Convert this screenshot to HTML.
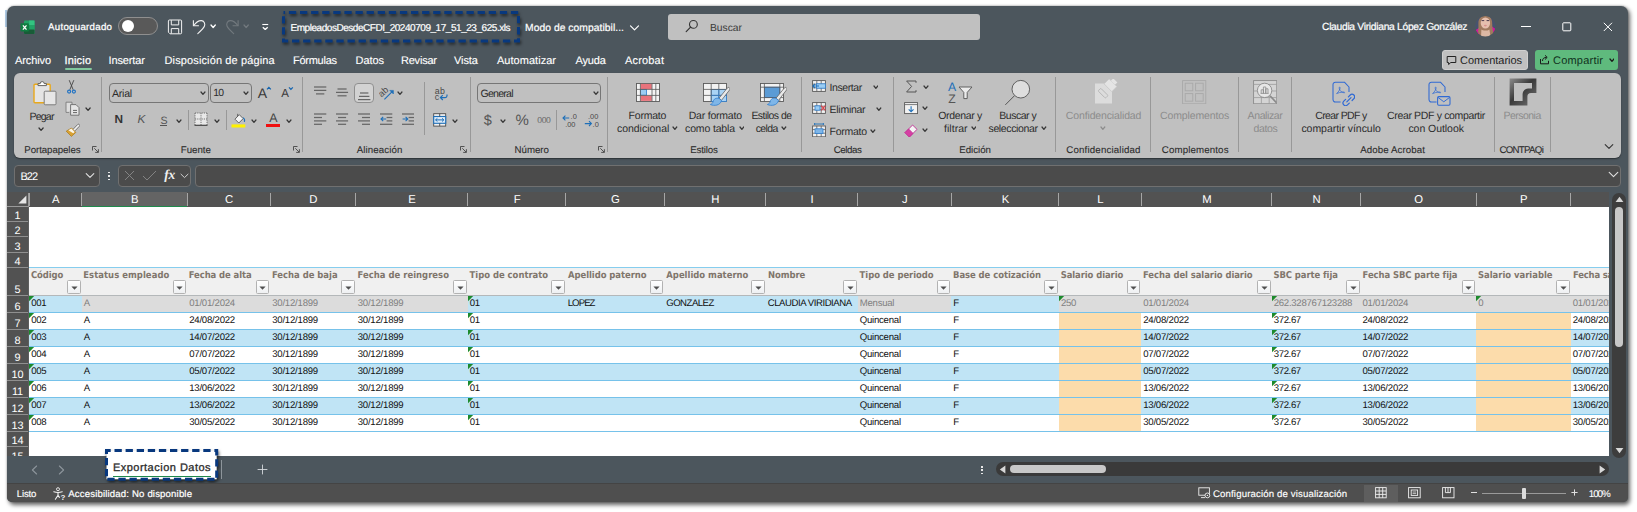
<!DOCTYPE html>
<html lang="es"><head><meta charset="utf-8"><title>EmpleadosDesdeCFDI - Excel</title>
<style>
html,body{margin:0;padding:0;background:#fff;}
body{width:1637px;height:512px;overflow:hidden;position:relative;font-family:'Liberation Sans', sans-serif;}
.a{position:absolute;display:block;}
.t{white-space:pre;text-rendering:geometricPrecision;}

</style></head><body>
<div class="a" style="left:5.4px;top:10px;width:1.6px;height:17px;background:#b4d0ea;filter:blur(0.4px);"></div>
<div class="a" style="left:7px;top:6px;width:1621px;height:496.3px;background:#4c565d;border-radius:7px 7px 5px 5px;box-shadow:2px 2.5px 4px rgba(0,0,0,.6),0 0 2px rgba(0,0,0,.35);"></div>
<svg class="a" style="left:20.4px;top:19.6px;" width="15" height="15" viewBox="0 0 15 15">
<rect x="4" y="0.5" width="10.5" height="13.5" rx="1" fill="#21a366"/>
<rect x="9.2" y="0.5" width="5.3" height="4.5" fill="#33c481"/>
<rect x="9.2" y="5" width="5.3" height="4.5" fill="#21a366"/>
<rect x="4" y="5" width="5.2" height="4.5" fill="#107c41"/>
<rect x="4" y="9.5" width="10.5" height="4.5" rx="1" fill="#185c37"/>
<rect x="0.5" y="3.2" width="8.4" height="8.4" rx="1" fill="#107c41"/>
<path d="M2.9 5.3 L6.5 9.6 M6.5 5.3 L2.9 9.6" stroke="#fff" stroke-width="1.3"/>
</svg>
<span class="a t" style="left:48.00px;top:21.00px;line-height:13px;font-size:9.7px;color:#fff;letter-spacing:0.285px;-webkit-text-stroke:0.25px #fff;">Autoguardado</span>
<div class="a" style="left:118.3px;top:17.2px;width:39.6px;height:17.8px;background:#595959;border:1px solid #8f8f8f;box-sizing:border-box;border-radius:9px;"></div>
<div class="a" style="left:121.8px;top:20.1px;width:12px;height:12px;background:#fff;border-radius:6px;"></div>
<svg class="a" style="left:167px;top:19px;" width="16" height="16" viewBox="0 0 16 16">
<path d="M1.4 2 a1 1 0 0 1 1 -1 H13.6 a1 1 0 0 1 1 1 V13.8 a1 1 0 0 1 -1 1 H3 L1.4 13.2 z" fill="none" stroke="#f2f2f2" stroke-width="1"/>
<path d="M4.3 1.2 V5.9 H11.7 V1.2" fill="none" stroke="#f2f2f2" stroke-width="1"/>
<path d="M4.3 14.6 V9.6 H11.7 V14.6" fill="none" stroke="#f2f2f2" stroke-width="1"/>
</svg>
<svg class="a" style="left:190px;top:18px;" width="18" height="18" viewBox="0 0 18 18">
<path d="M3.4 2.3 V7.8 H8.9" fill="none" stroke="#f0f0f0" stroke-width="1.1" stroke-linejoin="miter"/>
<path d="M3.7 7.5 C6 4.2 9 2.5 11.4 2.6 C14 2.8 15.4 5.6 14.5 8 C13.7 10 10.2 13.4 7.8 15.6" fill="none" stroke="#f0f0f0" stroke-width="1.1" stroke-linecap="round"/>
</svg>
<svg class="a" style="left:210.24px;top:24.15px;" width="6.32" height="4.5" viewBox="0 0 6.32 4.5"><path d="M1 1 L3.16 3.5 L5.32 1" fill="none" stroke="#fff" stroke-width="1.3" stroke-linecap="round" stroke-linejoin="round"/></svg>
<svg class="a" style="left:224px;top:18px;" width="18" height="18" viewBox="0 0 18 18">
<path d="M14.1 2.3 V7.8 H8.6" fill="none" stroke="#72797e" stroke-width="1.1" stroke-linejoin="miter"/>
<path d="M13.8 7.5 C11.5 4.2 8.5 2.5 6.1 2.6 C3.5 2.8 2.1 5.6 3 8 C3.8 10 7.3 13.4 9.7 15.6" fill="none" stroke="#72797e" stroke-width="1.1" stroke-linecap="round"/>
</svg>
<svg class="a" style="left:243.44px;top:24.15px;" width="6.32" height="4.5" viewBox="0 0 6.32 4.5"><path d="M1 1 L3.16 3.5 L5.32 1" fill="none" stroke="#72797e" stroke-width="1.2" stroke-linecap="round" stroke-linejoin="round"/></svg>
<svg class="a" style="left:261px;top:22px;" width="9" height="9" viewBox="0 0 9 9"><path d="M1.3 2.5 h5.9" stroke="#fff" stroke-width="1.1"/><path d="M1.8 5.2 L4.25 7.4 L6.7 5.2" fill="none" stroke="#fff" stroke-width="1.3" stroke-linejoin="round"/></svg>
<svg class="a" style="left:276px;top:5px;filter:drop-shadow(1.5px 2px 1.5px rgba(0,0,0,.55));overflow:visible;" width="250" height="43.5" viewBox="0 0 250 43.5"><rect x="7.5" y="7.5" width="235" height="28.5" fill="none" stroke="#08387e" stroke-width="3" stroke-dasharray="7.3 3.8" stroke-dashoffset="-5.4"/></svg>
<span class="a t" style="left:290.50px;top:22.00px;line-height:13px;font-size:10px;color:#fff;letter-spacing:-0.456px;-webkit-text-stroke:0.2px #fff;">EmpleadosDesdeCFDI_20240709_17_51_23_625.xls</span>
<span class="a t" style="left:525.00px;top:22.00px;line-height:13px;font-size:10.3px;color:#fff;letter-spacing:0.055px;-webkit-text-stroke:0.2px #fff;">Modo de compatibil...</span>
<svg class="a" style="left:629px;top:23.5px;" width="11" height="8" viewBox="0 0 11 8"><path d="M1.5 1.8 L5.5 5.8 L9.5 1.8" fill="none" stroke="#fff" stroke-width="1.2" stroke-linecap="round" stroke-linejoin="round"/></svg>
<div class="a" style="left:668px;top:13.5px;width:312px;height:26px;background:#c0c0c0;border-radius:3px;"></div>
<svg class="a" style="left:685px;top:19px;" width="14" height="14" viewBox="0 0 14 14"><circle cx="8.4" cy="5.4" r="3.9" fill="none" stroke="#333" stroke-width="1.1"/><path d="M5.6 8.2 L1.2 12.6" stroke="#333" stroke-width="1.2" stroke-linecap="round"/></svg>
<span class="a t" style="left:710.00px;top:22.00px;line-height:13px;font-size:10.3px;color:#3a3a3a;letter-spacing:-0.017px;">Buscar</span>
<span class="a t" style="left:1322.00px;top:21.00px;line-height:13px;font-size:10.3px;color:#fff;letter-spacing:-0.304px;-webkit-text-stroke:0.2px #fff;">Claudia Viridiana López González</span>
<svg class="a" style="left:1475px;top:16.3px;" width="20.6" height="20.6" viewBox="0 0 20.6 20.6">
<defs><clipPath id="av"><circle cx="10.3" cy="10.3" r="10.2"/></clipPath><filter id="avb" x="-20%" y="-20%" width="140%" height="140%"><feGaussianBlur stdDeviation="0.7"/></filter></defs>
<g clip-path="url(#av)"><g filter="url(#avb)">
<rect x="-2" y="-2" width="25" height="25" fill="#46526e"/>
<path d="M-1 15 L4 12 L8 22 H-1 z M22 14 L17 10.5 L15 22 H22 z" fill="#d3149c"/>
<path d="M3.4 7 C3.4 1.6 7 0 10.4 0 C14 0 17.4 1.8 17.2 7.4 C17.2 11 17.8 14 18.4 17 L16 21 H5.4 L3 16 C3.6 13 3.4 10 3.4 7 z" fill="#a07a5e"/>
<ellipse cx="10.4" cy="7" rx="4.7" ry="5.6" fill="#e6bfae"/>
<path d="M6.4 13.6 C8 15 12.6 15 14.4 13.4 L15.6 21 H6 z" fill="#dcb8a4"/>
<path d="M6.6 4.6 h2.6 M11.6 4.6 h2.6" stroke="#4a3a4a" stroke-width="1"/>
<ellipse cx="10.4" cy="9.6" rx="1.5" ry="0.8" fill="#d8908c"/>
</g></g></svg>
<svg class="a" style="left:1520px;top:20px;" width="12" height="12" viewBox="0 0 12 12"><path d="M1 6.5 h10" stroke="#fff" stroke-width="1"/></svg>
<svg class="a" style="left:1562.2px;top:21.5px;" width="10" height="10" viewBox="0 0 10 10"><rect x="0.8" y="0.8" width="8" height="8" rx="0.8" fill="none" stroke="#fff" stroke-width="1"/></svg>
<svg class="a" style="left:1603px;top:21.5px;" width="10" height="10" viewBox="0 0 10 10"><path d="M0.8 0.8 L9 9 M9 0.8 L0.8 9" stroke="#fff" stroke-width="1"/></svg>
<span class="a t" style="left:15.00px;top:54.00px;line-height:14px;font-size:11px;color:#fff;letter-spacing:-0.112px;-webkit-text-stroke:0.12px #fff;">Archivo</span>
<span class="a t" style="left:64.50px;top:54.00px;line-height:14px;font-size:11px;color:#fff;letter-spacing:0.165px;-webkit-text-stroke:0.25px #fff;">Inicio</span>
<span class="a t" style="left:108.50px;top:54.00px;line-height:14px;font-size:11px;color:#fff;letter-spacing:-0.117px;-webkit-text-stroke:0.12px #fff;">Insertar</span>
<span class="a t" style="left:164.50px;top:54.00px;line-height:14px;font-size:11px;color:#fff;letter-spacing:0.126px;-webkit-text-stroke:0.12px #fff;">Disposición de página</span>
<span class="a t" style="left:293.00px;top:54.00px;line-height:14px;font-size:11px;color:#fff;letter-spacing:-0.263px;-webkit-text-stroke:0.12px #fff;">Fórmulas</span>
<span class="a t" style="left:355.50px;top:54.00px;line-height:14px;font-size:11px;color:#fff;letter-spacing:-0.062px;-webkit-text-stroke:0.12px #fff;">Datos</span>
<span class="a t" style="left:401.00px;top:54.00px;line-height:14px;font-size:11px;color:#fff;letter-spacing:-0.220px;-webkit-text-stroke:0.12px #fff;">Revisar</span>
<span class="a t" style="left:454.00px;top:54.00px;line-height:14px;font-size:11px;color:#fff;letter-spacing:-0.077px;-webkit-text-stroke:0.12px #fff;">Vista</span>
<span class="a t" style="left:497.00px;top:54.00px;line-height:14px;font-size:11px;color:#fff;letter-spacing:0.028px;-webkit-text-stroke:0.12px #fff;">Automatizar</span>
<span class="a t" style="left:575.50px;top:54.00px;line-height:14px;font-size:11px;color:#fff;letter-spacing:-0.136px;-webkit-text-stroke:0.12px #fff;">Ayuda</span>
<span class="a t" style="left:625.00px;top:54.00px;line-height:14px;font-size:11px;color:#fff;letter-spacing:0.176px;-webkit-text-stroke:0.12px #fff;">Acrobat</span>
<div class="a" style="left:64.5px;top:68px;width:27px;height:1.5px;background:#80c89d;border-radius:1px;"></div>
<div class="a" style="left:1442px;top:50px;width:85.5px;height:19.5px;background:#c0c0c0;border:1px solid #d0d0d0;box-sizing:border-box;border-radius:3px;"></div>
<svg class="a" style="left:1446px;top:54.5px;" width="11" height="11" viewBox="0 0 11 11"><path d="M1.2 1.5 h8.6 v6 h-5 l-2.2 2 v-2 h-1.4 z" fill="none" stroke="#222" stroke-width="1" stroke-linejoin="round"/></svg>
<span class="a t" style="left:1460.00px;top:54.00px;line-height:14px;font-size:11px;color:#1e1e1e;letter-spacing:-0.036px;">Comentarios</span>
<div class="a" style="left:1535px;top:49.5px;width:82.5px;height:20.5px;background:#5fba7d;border-radius:3px;"></div>
<svg class="a" style="left:1538.5px;top:54px;" width="11" height="11" viewBox="0 0 11 11"><path d="M1.5 5 v4.8 h8 v-3" fill="none" stroke="#1a1a1a" stroke-width="1"/><path d="M3.5 7 C3.5 4.6 5 3.4 7.6 3.4 M6 1.3 L8.2 3.4 L6 5.5" fill="none" stroke="#1a1a1a" stroke-width="1" stroke-linejoin="round"/></svg>
<span class="a t" style="left:1553.00px;top:54.00px;line-height:14px;font-size:11px;color:#10301c;letter-spacing:0.210px;">Compartir</span>
<svg class="a" style="left:1608.52px;top:58.15px;" width="5.960000000000001" height="4.3" viewBox="0 0 5.960000000000001 4.3"><path d="M1 1 L2.9800000000000004 3.3 L4.960000000000001 1" fill="none" stroke="#1a1a1a" stroke-width="1.25" stroke-linecap="round" stroke-linejoin="round"/></svg>
<div class="a" style="left:14px;top:73px;width:1607px;height:85px;background:#c0c0c0;border-radius:6px;box-shadow:0 1px 1.5px rgba(0,0,0,.45);"></div>
<div class="a" style="left:100.9px;top:77.2px;width:1px;height:75.2px;background:#989898;"></div>
<div class="a" style="left:301.9px;top:77.2px;width:1px;height:75.2px;background:#989898;"></div>
<div class="a" style="left:469.5px;top:77.2px;width:1px;height:75.2px;background:#989898;"></div>
<div class="a" style="left:606.5px;top:77.2px;width:1px;height:75.2px;background:#989898;"></div>
<div class="a" style="left:800.5px;top:77.2px;width:1px;height:75.2px;background:#989898;"></div>
<div class="a" style="left:892.8px;top:77.2px;width:1px;height:75.2px;background:#989898;"></div>
<div class="a" style="left:1055.3px;top:77.2px;width:1px;height:75.2px;background:#989898;"></div>
<div class="a" style="left:1149.5px;top:77.2px;width:1px;height:75.2px;background:#989898;"></div>
<div class="a" style="left:1237.8px;top:77.2px;width:1px;height:75.2px;background:#989898;"></div>
<div class="a" style="left:1291.0px;top:77.2px;width:1px;height:75.2px;background:#989898;"></div>
<div class="a" style="left:1493.5px;top:77.2px;width:1px;height:75.2px;background:#989898;"></div>
<div class="a" style="left:1549.5px;top:77.2px;width:1px;height:75.2px;background:#989898;"></div>
<div class="a" style="left:188.0px;top:110.2px;width:1px;height:20.2px;background:#989898;"></div>
<div class="a" style="left:225.8px;top:110.2px;width:1px;height:20.2px;background:#989898;"></div>
<div class="a" style="left:423.6px;top:82.3px;width:1px;height:52.4px;background:#989898;"></div>
<div class="a" style="left:555.9px;top:110.2px;width:1px;height:20.2px;background:#989898;"></div>
<span class="a t" style="left:24.30px;top:144.00px;line-height:13px;font-size:9.7px;color:#2c2c2c;letter-spacing:-0.072px;-webkit-text-stroke:0.1px #2c2c2c;">Portapapeles</span>
<svg class="a" style="left:92.2px;top:145.9px;" width="7" height="7" viewBox="0 0 7 7"><path d="M0.5 4.5 V0.5 H4.5" fill="none" stroke="#444" stroke-width="0.9"/><path d="M2.3 2.3 L6.2 6.2 M6.4 3.2 V6.4 H3.2" fill="none" stroke="#444" stroke-width="0.9"/></svg>
<span class="a t" style="left:180.80px;top:144.00px;line-height:13px;font-size:9.7px;color:#2c2c2c;letter-spacing:-0.032px;-webkit-text-stroke:0.1px #2c2c2c;">Fuente</span>
<svg class="a" style="left:292.8px;top:145.9px;" width="7" height="7" viewBox="0 0 7 7"><path d="M0.5 4.5 V0.5 H4.5" fill="none" stroke="#444" stroke-width="0.9"/><path d="M2.3 2.3 L6.2 6.2 M6.4 3.2 V6.4 H3.2" fill="none" stroke="#444" stroke-width="0.9"/></svg>
<span class="a t" style="left:356.70px;top:144.00px;line-height:13px;font-size:9.7px;color:#2c2c2c;letter-spacing:0.101px;-webkit-text-stroke:0.1px #2c2c2c;">Alineación</span>
<svg class="a" style="left:459.9px;top:145.9px;" width="7" height="7" viewBox="0 0 7 7"><path d="M0.5 4.5 V0.5 H4.5" fill="none" stroke="#444" stroke-width="0.9"/><path d="M2.3 2.3 L6.2 6.2 M6.4 3.2 V6.4 H3.2" fill="none" stroke="#444" stroke-width="0.9"/></svg>
<span class="a t" style="left:514.60px;top:144.00px;line-height:13px;font-size:9.7px;color:#2c2c2c;letter-spacing:-0.031px;-webkit-text-stroke:0.1px #2c2c2c;">Número</span>
<svg class="a" style="left:597.7px;top:145.9px;" width="7" height="7" viewBox="0 0 7 7"><path d="M0.5 4.5 V0.5 H4.5" fill="none" stroke="#444" stroke-width="0.9"/><path d="M2.3 2.3 L6.2 6.2 M6.4 3.2 V6.4 H3.2" fill="none" stroke="#444" stroke-width="0.9"/></svg>
<span class="a t" style="left:690.30px;top:144.00px;line-height:13px;font-size:9.7px;color:#2c2c2c;letter-spacing:-0.174px;-webkit-text-stroke:0.1px #2c2c2c;">Estilos</span>
<span class="a t" style="left:833.80px;top:144.00px;line-height:13px;font-size:9.7px;color:#2c2c2c;letter-spacing:-0.431px;-webkit-text-stroke:0.1px #2c2c2c;">Celdas</span>
<span class="a t" style="left:959.30px;top:144.00px;line-height:13px;font-size:9.7px;color:#2c2c2c;letter-spacing:-0.012px;-webkit-text-stroke:0.1px #2c2c2c;">Edición</span>
<span class="a t" style="left:1066.30px;top:144.00px;line-height:13px;font-size:9.7px;color:#2c2c2c;letter-spacing:0.171px;-webkit-text-stroke:0.1px #2c2c2c;">Confidencialidad</span>
<span class="a t" style="left:1161.80px;top:144.00px;line-height:13px;font-size:9.7px;color:#2c2c2c;letter-spacing:0.140px;-webkit-text-stroke:0.1px #2c2c2c;">Complementos</span>
<span class="a t" style="left:1360.30px;top:144.00px;line-height:13px;font-size:9.7px;color:#2c2c2c;letter-spacing:0.093px;-webkit-text-stroke:0.1px #2c2c2c;">Adobe Acrobat</span>
<span class="a t" style="left:1499.50px;top:144.00px;line-height:13px;font-size:9.7px;color:#2c2c2c;letter-spacing:-0.718px;-webkit-text-stroke:0.1px #2c2c2c;">CONTPAQi</span>
<svg class="a" style="left:32.6px;top:79.6px;" width="24" height="26" viewBox="0 0 24 26">
<rect x="1" y="4.2" width="16.2" height="18.6" rx="1" fill="#e4e4e4" stroke="#e8a81c" stroke-width="1.4"/>
<path d="M5 5.6 v-2 h2.2 a2 2 0 0 1 4 0 h2.2 v2 z" fill="#fff" stroke="#555" stroke-width="0.9" stroke-linejoin="round"/>
<rect x="11.2" y="11.2" width="11.8" height="13.6" rx="1" fill="#e6e6e6" stroke="#7c7c7c" stroke-width="1"/>
</svg>
<span class="a t" style="left:29.50px;top:110.00px;line-height:14px;font-size:10.6px;color:#2c2c2c;letter-spacing:-0.825px;">Pegar</span>
<svg class="a" style="left:38.43px;top:126.8px;" width="6.14" height="4.4" viewBox="0 0 6.14 4.4"><path d="M1 1 L3.07 3.4 L5.14 1" fill="none" stroke="#333" stroke-width="1.25" stroke-linecap="round" stroke-linejoin="round"/></svg>
<svg class="a" style="left:66px;top:79.5px;" width="11" height="14" viewBox="0 0 11 14">
<path d="M3.2 0.2 L7.2 9.8 M7.8 0.2 L3.8 9.8" stroke="#444" stroke-width="0.9" fill="none"/>
<circle cx="3.1" cy="11.6" r="1.5" fill="none" stroke="#2273c3" stroke-width="1.2"/>
<circle cx="7.9" cy="11.6" r="1.5" fill="none" stroke="#2273c3" stroke-width="1.2"/>
</svg>
<svg class="a" style="left:64.5px;top:100.5px;" width="15" height="15" viewBox="0 0 15 15">
<path d="M4.2 11.4 h-3.2 v-10.2 h6 v2" fill="#ddd" stroke="#7a7a7a" stroke-width="0.9"/>
<path d="M5.6 3.6 h5.4 l3 3 v7.6 h-8.4 z" fill="#e6e6e6" stroke="#6a6a6a" stroke-width="0.9" stroke-linejoin="round"/>
<path d="M8 9.4 h4 M8 11.6 h4" stroke="#555" stroke-width="0.9"/>
</svg>
<svg class="a" style="left:84.53px;top:106.5px;" width="6.14" height="4.4" viewBox="0 0 6.14 4.4"><path d="M1 1 L3.07 3.4 L5.14 1" fill="none" stroke="#333" stroke-width="1.25" stroke-linecap="round" stroke-linejoin="round"/></svg>
<svg class="a" style="left:64.5px;top:122.5px;" width="15" height="15" viewBox="0 0 15 15">
<path d="M8.2 6.2 L12.6 1.6 a1.2 1.2 0 0 1 1.7 1.7 L9.9 7.9" fill="#f2f2f2" stroke="#666" stroke-width="0.9"/>
<path d="M1.2 8.2 L6.6 5 L10.8 9.4 L6.4 13.4 z" fill="#d9a233" stroke="#a8781a" stroke-width="0.7" stroke-linejoin="round"/>
<path d="M3.4 7.2 L6.4 5.6 L9.6 9 L8.2 10.2 z" fill="#fff" opacity=".9"/>
</svg>
<div class="a" style="left:108.9px;top:83.2px;width:99.7px;height:20px;background:#c0c0c0;border:1px solid #767676;box-sizing:border-box;border-radius:4px;"></div>
<span class="a t" style="left:112.00px;top:87.00px;line-height:14px;font-size:10.6px;color:#2c2c2c;letter-spacing:-0.270px;">Arial</span>
<svg class="a" style="left:199.92px;top:91.1px;" width="5.960000000000001" height="4.4" viewBox="0 0 5.960000000000001 4.4"><path d="M1 1 L2.9800000000000004 3.4 L4.960000000000001 1" fill="none" stroke="#383838" stroke-width="1.25" stroke-linecap="round" stroke-linejoin="round"/></svg>
<div class="a" style="left:210.3px;top:83.2px;width:41.3px;height:20px;background:#c0c0c0;border:1px solid #767676;box-sizing:border-box;border-radius:4px;"></div>
<span class="a t" style="left:213.20px;top:87.00px;line-height:14px;font-size:10.4px;color:#2c2c2c;letter-spacing:-0.6px;">10</span>
<svg class="a" style="left:243.32px;top:91.1px;" width="5.960000000000001" height="4.4" viewBox="0 0 5.960000000000001 4.4"><path d="M1 1 L2.9800000000000004 3.4 L4.960000000000001 1" fill="none" stroke="#383838" stroke-width="1.25" stroke-linecap="round" stroke-linejoin="round"/></svg>
<span class="a t" style="left:257.80px;top:84.00px;line-height:18px;font-size:14px;color:#3a3a3a;">A</span>
<svg class="a" style="left:266.4px;top:86.2px;" width="6" height="5" viewBox="0 0 6 5"><path d="M1 3.4 L2.9 1.4 L4.8 3.4" fill="none" stroke="#1565b0" stroke-width="1.3"/></svg>
<span class="a t" style="left:281.30px;top:87.00px;line-height:15px;font-size:11.5px;color:#3a3a3a;">A</span>
<svg class="a" style="left:288px;top:86.2px;" width="6" height="5" viewBox="0 0 6 5"><path d="M1 1.4 L2.9 3.4 L4.8 1.4" fill="none" stroke="#1565b0" stroke-width="1.3"/></svg>
<span class="a t" style="left:114.60px;top:112.00px;line-height:15px;font-size:11.8px;color:#333;font-weight:700;">N</span>
<span class="a t" style="left:137.60px;top:112.00px;line-height:15px;font-size:11.8px;color:#555;font-style:italic;">K</span>
<span class="a t" style="left:160.50px;top:114.00px;line-height:14px;font-size:10.6px;color:#555;">S</span>
<div class="a" style="left:160.2px;top:124.7px;width:6.4px;height:1px;background:#555;"></div>
<svg class="a" style="left:176.32px;top:118.6px;" width="5.960000000000001" height="4.4" viewBox="0 0 5.960000000000001 4.4"><path d="M1 1 L2.9800000000000004 3.4 L4.960000000000001 1" fill="none" stroke="#383838" stroke-width="1.25" stroke-linecap="round" stroke-linejoin="round"/></svg>
<svg class="a" style="left:193.7px;top:112.4px;" width="14" height="14.5" viewBox="0 0 14 14.5">
<rect x="1" y="1" width="12" height="12" fill="#e8e8e8"/>
<path d="M1 1 h12 M1 1 v12 M13 1 v12 M7 1 v12 M1 7 h12" stroke="#666" stroke-width="0.9" stroke-dasharray="1.2 1" fill="none"/>
<path d="M0.5 13.3 h13" stroke="#444" stroke-width="1.2"/>
</svg>
<svg class="a" style="left:213.62px;top:118.6px;" width="5.960000000000001" height="4.4" viewBox="0 0 5.960000000000001 4.4"><path d="M1 1 L2.9800000000000004 3.4 L4.960000000000001 1" fill="none" stroke="#383838" stroke-width="1.25" stroke-linecap="round" stroke-linejoin="round"/></svg>
<svg class="a" style="left:231px;top:112.5px;" width="15" height="15" viewBox="0 0 15 15">
<path d="M4 6.2 L8.2 1.6 L12.2 5.6 L7.8 10 z" fill="#f4f4f4" stroke="#555" stroke-width="0.9" stroke-linejoin="round"/>
<path d="M6.6 3.4 L6.6 0.8" stroke="#555" stroke-width="0.8"/>
<path d="M12 4.6 c1.6 1 1.9 2.6 1.4 4.2" fill="none" stroke="#1e6fb8" stroke-width="1.1"/>
<rect x="0.5" y="11.4" width="13.8" height="3.1" fill="#fff100"/>
</svg>
<svg class="a" style="left:251.02px;top:118.6px;" width="5.960000000000001" height="4.4" viewBox="0 0 5.960000000000001 4.4"><path d="M1 1 L2.9800000000000004 3.4 L4.960000000000001 1" fill="none" stroke="#383838" stroke-width="1.25" stroke-linecap="round" stroke-linejoin="round"/></svg>
<span class="a t" style="left:269.20px;top:110.00px;line-height:16px;font-size:12.4px;color:#444;">A</span>
<div class="a" style="left:266.4px;top:123.9px;width:13.5px;height:3.1px;background:#f01010;"></div>
<svg class="a" style="left:285.82px;top:118.6px;" width="5.960000000000001" height="4.4" viewBox="0 0 5.960000000000001 4.4"><path d="M1 1 L2.9800000000000004 3.4 L4.960000000000001 1" fill="none" stroke="#383838" stroke-width="1.25" stroke-linecap="round" stroke-linejoin="round"/></svg>
<svg class="a" style="left:313.8px;top:84.6px;" width="14" height="10.9" viewBox="0 0 14 10.9"><path d="M0.00 2.00 H12.30" stroke="#666" stroke-width="1.25"/><path d="M0.00 5.40 H12.30" stroke="#666" stroke-width="1.25"/><path d="M2.00 8.90 H10.30" stroke="#666" stroke-width="1.25"/></svg>
<svg class="a" style="left:336px;top:87.2px;" width="14" height="10.8" viewBox="0 0 14 10.8"><path d="M1.50 2.00 H10.60" stroke="#666" stroke-width="1.25"/><path d="M0.00 5.40 H12.10" stroke="#666" stroke-width="1.25"/><path d="M1.50 8.80 H10.60" stroke="#666" stroke-width="1.25"/></svg>
<div class="a" style="left:354.2px;top:83.2px;width:20.1px;height:19.8px;background:#d2d2d2;border:1px solid #8f8f8f;box-sizing:border-box;border-radius:4px;"></div>
<svg class="a" style="left:358px;top:90.6px;" width="14" height="10.6" viewBox="0 0 14 10.6"><path d="M2.00 2.00 H10.40" stroke="#666" stroke-width="1.25"/><path d="M1.00 5.40 H11.40" stroke="#666" stroke-width="1.25"/><path d="M0.00 8.60 H12.40" stroke="#666" stroke-width="1.25"/></svg>
<svg class="a" style="left:378.5px;top:85.5px;" width="16" height="15" viewBox="0 0 16 15">
<text x="0.2" y="8.6" font-family="Liberation Sans, sans-serif" font-size="9.2" fill="#484848" transform="rotate(-42 5 7)">ab</text>
<path d="M5.4 13.4 L13.4 5.4" stroke="#1e6fb8" stroke-width="1.1" fill="none"/>
<path d="M10.8 4.4 H14.4 V8 z" fill="#1e6fb8" stroke="#1e6fb8" stroke-width="0.6" stroke-linejoin="round"/>
</svg>
<svg class="a" style="left:397.42px;top:91.2px;" width="5.960000000000001" height="4.4" viewBox="0 0 5.960000000000001 4.4"><path d="M1 1 L2.9800000000000004 3.4 L4.960000000000001 1" fill="none" stroke="#383838" stroke-width="1.25" stroke-linecap="round" stroke-linejoin="round"/></svg>
<svg class="a" style="left:313.8px;top:112.1px;" width="14" height="14.3" viewBox="0 0 14 14.3"><path d="M0.00 2.00 H12.30" stroke="#666" stroke-width="1.25"/><path d="M0.00 5.50 H8.00" stroke="#666" stroke-width="1.25"/><path d="M0.00 8.90 H12.30" stroke="#666" stroke-width="1.25"/><path d="M0.00 12.30 H8.00" stroke="#666" stroke-width="1.25"/></svg>
<svg class="a" style="left:336px;top:112.1px;" width="14" height="14.3" viewBox="0 0 14 14.3"><path d="M0.00 2.00 H12.10" stroke="#666" stroke-width="1.25"/><path d="M2.00 5.50 H10.10" stroke="#666" stroke-width="1.25"/><path d="M0.00 8.90 H12.10" stroke="#666" stroke-width="1.25"/><path d="M2.00 12.30 H10.10" stroke="#666" stroke-width="1.25"/></svg>
<svg class="a" style="left:358.1px;top:112.1px;" width="14" height="14.3" viewBox="0 0 14 14.3"><path d="M0.00 2.00 H12.00" stroke="#666" stroke-width="1.25"/><path d="M4.00 5.50 H12.00" stroke="#666" stroke-width="1.25"/><path d="M0.00 8.90 H12.00" stroke="#666" stroke-width="1.25"/><path d="M4.00 12.30 H12.00" stroke="#666" stroke-width="1.25"/></svg>
<svg class="a" style="left:380px;top:112.1px;" width="14" height="14.3" viewBox="0 0 14 14.3"><path d="M0.00 2.00 H12.30" stroke="#666" stroke-width="1.25"/><path d="M6.60 5.50 H12.30" stroke="#666" stroke-width="1.25"/><path d="M6.60 8.90 H12.30" stroke="#666" stroke-width="1.25"/><path d="M0.00 12.30 H12.30" stroke="#666" stroke-width="1.25"/></svg>
<svg class="a" style="left:379.5px;top:116.3px;" width="7" height="6" viewBox="0 0 7 6"><path d="M1 3 H6.2 M3.2 0.8 L1 3 L3.2 5.2" fill="none" stroke="#1e6fb8" stroke-width="1.1"/></svg>
<svg class="a" style="left:402.3px;top:112.1px;" width="14" height="14.3" viewBox="0 0 14 14.3"><path d="M0.00 2.00 H12.00" stroke="#666" stroke-width="1.25"/><path d="M6.60 5.50 H12.00" stroke="#666" stroke-width="1.25"/><path d="M6.60 8.90 H12.00" stroke="#666" stroke-width="1.25"/><path d="M0.00 12.30 H12.00" stroke="#666" stroke-width="1.25"/></svg>
<svg class="a" style="left:401.6px;top:116.3px;" width="7" height="6" viewBox="0 0 7 6"><path d="M0.6 3 H5.8 M3.6 0.8 L5.8 3 L3.6 5.2" fill="none" stroke="#1e6fb8" stroke-width="1.1"/></svg>
<svg class="a" style="left:434px;top:86.5px;" width="15" height="14" viewBox="0 0 15 14">
<text x="0.8" y="6.6" font-family="Liberation Sans, sans-serif" font-size="8.8" fill="#484848" letter-spacing="0.3">ab</text>
<text x="0.8" y="12.8" font-family="Liberation Sans, sans-serif" font-size="8.8" fill="#484848">c</text>
<path d="M13 7.4 v1.4 a1.8 1.8 0 0 1 -1.8 1.8 h-4.6 M8.8 8.2 L6.4 10.6 L8.8 13" fill="none" stroke="#1e6fb8" stroke-width="1.2"/>
</svg>
<svg class="a" style="left:432.7px;top:112.6px;" width="14" height="14" viewBox="0 0 14 14">
<rect x="0.7" y="0.7" width="12" height="12.4" fill="#f0f0f0" stroke="#4a4a4a" stroke-width="0.9"/>
<rect x="0.7" y="3.5" width="12" height="6.8" fill="#dbeaf8" stroke="#1e6fb8" stroke-width="1.1"/>
<path d="M6.7 0.7 v2.8 M6.7 10.3 v2.8" stroke="#4a4a4a" stroke-width="0.9"/>
<path d="M2.6 6.9 h8.2 M4.4 5.3 L2.6 6.9 L4.4 8.5 M9 5.3 L10.8 6.9 L9 8.5" fill="none" stroke="#1e6fb8" stroke-width="1"/>
</svg>
<svg class="a" style="left:452.42px;top:118.6px;" width="5.960000000000001" height="4.4" viewBox="0 0 5.960000000000001 4.4"><path d="M1 1 L2.9800000000000004 3.4 L4.960000000000001 1" fill="none" stroke="#383838" stroke-width="1.25" stroke-linecap="round" stroke-linejoin="round"/></svg>
<div class="a" style="left:476.9px;top:83.2px;width:123.8px;height:20px;background:#c0c0c0;border:1px solid #767676;box-sizing:border-box;border-radius:4px;"></div>
<span class="a t" style="left:480.40px;top:87.00px;line-height:14px;font-size:10.6px;color:#2c2c2c;letter-spacing:-0.747px;">General</span>
<svg class="a" style="left:592.62px;top:91.1px;" width="5.960000000000001" height="4.4" viewBox="0 0 5.960000000000001 4.4"><path d="M1 1 L2.9800000000000004 3.4 L4.960000000000001 1" fill="none" stroke="#383838" stroke-width="1.25" stroke-linecap="round" stroke-linejoin="round"/></svg>
<span class="a t" style="left:483.80px;top:112.00px;line-height:19px;font-size:14.5px;color:#555;">$</span>
<svg class="a" style="left:500.12px;top:118.6px;" width="5.960000000000001" height="4.4" viewBox="0 0 5.960000000000001 4.4"><path d="M1 1 L2.9800000000000004 3.4 L4.960000000000001 1" fill="none" stroke="#383838" stroke-width="1.25" stroke-linecap="round" stroke-linejoin="round"/></svg>
<span class="a t" style="left:515.60px;top:111.00px;line-height:20px;font-size:15px;color:#555;">%</span>
<span class="a t" style="left:537.30px;top:115.00px;line-height:11px;font-size:8.6px;color:#666;letter-spacing:-0.367px;">000</span>
<svg class="a" style="left:561.7px;top:112.8px;" width="15" height="15" viewBox="0 0 15 15">
<path d="M1 5 H7.2 M3.4 2.6 L1 5 L3.4 7.4" fill="none" stroke="#1e6fb8" stroke-width="1.1"/>
<text x="8.6" y="6.4" font-family="Liberation Sans, sans-serif" font-size="7.4" fill="#4a4a4a">.0</text>
<text x="3.2" y="13.6" font-family="Liberation Sans, sans-serif" font-size="7.4" fill="#4a4a4a">.00</text>
</svg>
<svg class="a" style="left:583.5px;top:112.8px;" width="15" height="15" viewBox="0 0 15 15">
<text x="4" y="6.4" font-family="Liberation Sans, sans-serif" font-size="7.4" fill="#4a4a4a">.00</text>
<path d="M0.8 10.6 H7.4 M5 8.2 L7.4 10.6 L5 13" fill="none" stroke="#1e6fb8" stroke-width="1.1"/>
<text x="8.6" y="13.6" font-family="Liberation Sans, sans-serif" font-size="7.4" fill="#4a4a4a">.0</text>
</svg>
<svg class="a" style="left:636px;top:83px;" width="24" height="19" viewBox="0 0 24 19">
<rect x="0.5" y="0.5" width="23" height="18" fill="#f4f4f4" stroke="#5a5a5a" stroke-width="0.9"/>
<rect x="4.6" y="0.9" width="11.2" height="5.3" fill="#e8737c"/>
<rect x="4.6" y="6.6" width="6" height="5.6" fill="#9bcdf3" stroke="#2f7fd0" stroke-width="0.8"/>
<rect x="4.6" y="12.6" width="11.2" height="5.3" fill="#e8737c"/>
<path d="M4.4 0.5 v18 M16 0.5 v18 M19.8 0.5 v18 M0.5 6.4 h23 M0.5 12.4 h23" stroke="#5a5a5a" stroke-width="0.8" fill="none"/>
</svg>
<span class="a t" style="left:628.60px;top:109.00px;line-height:14px;font-size:10.5px;color:#2c2c2c;letter-spacing:-0.214px;">Formato</span>
<span class="a t" style="left:616.90px;top:122.00px;line-height:14px;font-size:10.5px;color:#2c2c2c;letter-spacing:-0.012px;">condicional</span>
<svg class="a" style="left:672.01px;top:126.3px;" width="5.78" height="4.4" viewBox="0 0 5.78 4.4"><path d="M1 1 L2.89 3.4 L4.78 1" fill="none" stroke="#383838" stroke-width="1.25" stroke-linecap="round" stroke-linejoin="round"/></svg>
<svg class="a" style="left:703px;top:83px;" width="27" height="23.5" viewBox="0 0 27 23.5">
<rect x="0.5" y="0.5" width="23" height="18" fill="#f2f2f2" stroke="#5a5a5a" stroke-width="0.9"/>
<rect x="8.2" y="6.4" width="15.2" height="12" fill="#a9d3f5" stroke="#2f7fd0" stroke-width="0.8"/>
<path d="M8.2 0.5 v18 M15.8 0.5 v18 M0.5 6.4 h23 M0.5 12.4 h23" stroke="#5a5a5a" stroke-width="0.8" fill="none"/>
<path d="M15.8 6.4 v12 M8.2 12.4 h15.2" stroke="#2f7fd0" stroke-width="0.8"/>
<path d="M16 15.2 L24.4 4.9 a1.5 1.5 0 0 1 2.3 1.9 L18.5 17.3 z" fill="#e9e9e9" stroke="#666" stroke-width="0.8" stroke-linejoin="round"/>
<path d="M16.1 15.4 C13 14.4 10.6 16.2 10.2 18.4 C10 19.8 9 20.9 7.4 21.5 C11 23.2 17.5 22.6 18.5 17.4 z" fill="#7fb6e8" stroke="#2f7fd0" stroke-width="0.8" stroke-linejoin="round"/></svg>
<span class="a t" style="left:688.70px;top:109.00px;line-height:14px;font-size:10.5px;color:#2c2c2c;letter-spacing:-0.213px;">Dar formato</span>
<span class="a t" style="left:685.10px;top:122.00px;line-height:14px;font-size:10.5px;color:#2c2c2c;letter-spacing:-0.157px;">como tabla</span>
<svg class="a" style="left:738.51px;top:126.3px;" width="5.78" height="4.4" viewBox="0 0 5.78 4.4"><path d="M1 1 L2.89 3.4 L4.78 1" fill="none" stroke="#383838" stroke-width="1.25" stroke-linecap="round" stroke-linejoin="round"/></svg>
<svg class="a" style="left:760px;top:83px;" width="27" height="23.5" viewBox="0 0 27 23.5">
<rect x="0.5" y="0.5" width="23" height="18" fill="#f2f2f2" stroke="#5a5a5a" stroke-width="0.9"/>
<rect x="4.4" y="4.2" width="15.4" height="10.4" fill="#5b9bd5" stroke="#2f6fb8" stroke-width="0.8"/>
<path d="M4.4 0.5 v18 M19.8 0.5 v18 M0.5 4.2 h23 M0.5 14.6 h23" stroke="#5a5a5a" stroke-width="0.8" fill="none"/>
<path d="M16 15.2 L24.4 4.9 a1.5 1.5 0 0 1 2.3 1.9 L18.5 17.3 z" fill="#e9e9e9" stroke="#666" stroke-width="0.8" stroke-linejoin="round"/>
<path d="M16.1 15.4 C13 14.4 10.6 16.2 10.2 18.4 C10 19.8 9 20.9 7.4 21.5 C11 23.2 17.5 22.6 18.5 17.4 z" fill="#7fb6e8" stroke="#2f7fd0" stroke-width="0.8" stroke-linejoin="round"/></svg>
<span class="a t" style="left:751.40px;top:109.00px;line-height:14px;font-size:10.5px;color:#2c2c2c;letter-spacing:-0.535px;">Estilos de</span>
<span class="a t" style="left:755.70px;top:122.00px;line-height:14px;font-size:10.5px;color:#2c2c2c;letter-spacing:-0.612px;">celda</span>
<svg class="a" style="left:781.31px;top:126.3px;" width="5.78" height="4.4" viewBox="0 0 5.78 4.4"><path d="M1 1 L2.89 3.4 L4.78 1" fill="none" stroke="#383838" stroke-width="1.25" stroke-linecap="round" stroke-linejoin="round"/></svg>
<svg class="a" style="left:812px;top:80.2px;" width="14" height="12" viewBox="0 0 14 12"><rect x="0.6" y="0.6" width="12.8" height="10.8" fill="#f2f2f2" stroke="#5a5a5a" stroke-width="0.9"/>
<path d="M0.6 4.2 h12.8 M0.6 7.8 h12.8 M4.8 0.6 v10.8 M9.2 0.6 v10.8" stroke="#5a5a5a" stroke-width="0.8" fill="none"/><rect x="4.4" y="3.8" width="9" height="4.4" fill="#9bcdf3" stroke="#2f7fd0" stroke-width="0.8"/>
<path d="M1 6 H7 M3 3.8 L0.8 6 L3 8.2" fill="none" stroke="#1e6fb8" stroke-width="1.1"/></svg>
<span class="a t" style="left:829.60px;top:81.00px;line-height:14px;font-size:10.5px;color:#2c2c2c;letter-spacing:-0.433px;">Insertar</span>
<svg class="a" style="left:872.51px;top:84.65px;" width="5.78" height="4.3" viewBox="0 0 5.78 4.3"><path d="M1 1 L2.89 3.3 L4.78 1" fill="none" stroke="#383838" stroke-width="1.25" stroke-linecap="round" stroke-linejoin="round"/></svg>
<svg class="a" style="left:812px;top:102.2px;" width="14" height="12" viewBox="0 0 14 12"><rect x="0.6" y="0.6" width="12.8" height="10.8" fill="#f2f2f2" stroke="#5a5a5a" stroke-width="0.9"/>
<path d="M0.6 4.2 h12.8 M0.6 7.8 h12.8 M4.8 0.6 v10.8 M9.2 0.6 v10.8" stroke="#5a5a5a" stroke-width="0.8" fill="none"/><rect x="3" y="3.8" width="5" height="4.4" fill="#9bcdf3" stroke="#2f7fd0" stroke-width="0.8"/>
<path d="M9.2 3.6 L13.4 8.4 M13.4 3.6 L9.2 8.4" stroke="#e0404a" stroke-width="1.1"/></svg>
<span class="a t" style="left:829.60px;top:103.00px;line-height:14px;font-size:10.5px;color:#2c2c2c;letter-spacing:-0.280px;">Eliminar</span>
<svg class="a" style="left:875.91px;top:106.65px;" width="5.78" height="4.3" viewBox="0 0 5.78 4.3"><path d="M1 1 L2.89 3.3 L4.78 1" fill="none" stroke="#383838" stroke-width="1.25" stroke-linecap="round" stroke-linejoin="round"/></svg>
<svg class="a" style="left:812px;top:123.4px;" width="14" height="14" viewBox="0 0 14 14"><path d="M2.6 1 H11.4 M2.6 0 v2 M11.4 0 v2" stroke="#1e6fb8" stroke-width="0.9"/>
<g transform="translate(0,2.4)"><rect x="0.6" y="0.6" width="12.8" height="10.8" fill="#f2f2f2" stroke="#5a5a5a" stroke-width="0.9"/>
<path d="M0.6 4.2 h12.8 M0.6 7.8 h12.8 M4.8 0.6 v10.8 M9.2 0.6 v10.8" stroke="#5a5a5a" stroke-width="0.8" fill="none"/><rect x="3" y="3.4" width="8" height="4.6" fill="#7fb6e8" stroke="#2f7fd0" stroke-width="0.8"/></g></svg>
<span class="a t" style="left:829.60px;top:125.00px;line-height:14px;font-size:10.5px;color:#2c2c2c;letter-spacing:-0.280px;">Formato</span>
<svg class="a" style="left:870.11px;top:128.65px;" width="5.78" height="4.3" viewBox="0 0 5.78 4.3"><path d="M1 1 L2.89 3.3 L4.78 1" fill="none" stroke="#383838" stroke-width="1.25" stroke-linecap="round" stroke-linejoin="round"/></svg>
<svg class="a" style="left:904.5px;top:80px;" width="13" height="13" viewBox="0 0 13 13"><path d="M11 2.8 V1 H1.6 L6.6 6.4 L1.6 12 H11 V10.2" fill="none" stroke="#555" stroke-width="1" stroke-linejoin="miter"/></svg>
<svg class="a" style="left:923.32px;top:84.6px;" width="5.960000000000001" height="4.4" viewBox="0 0 5.960000000000001 4.4"><path d="M1 1 L2.9800000000000004 3.4 L4.960000000000001 1" fill="none" stroke="#383838" stroke-width="1.25" stroke-linecap="round" stroke-linejoin="round"/></svg>
<svg class="a" style="left:903.8px;top:102.2px;" width="14.4" height="12.4" viewBox="0 0 14.4 12.4"><rect x="0.6" y="0.6" width="13" height="11" fill="#f2f2f2" stroke="#5a5a5a" stroke-width="0.9"/>
<path d="M0.6 2.6 h13" stroke="#5a5a5a" stroke-width="0.8"/>
<path d="M7.1 4.2 V9.8 M4.7 7.4 L7.1 9.8 L9.5 7.4" fill="none" stroke="#1e6fb8" stroke-width="1.1"/></svg>
<svg class="a" style="left:921.82px;top:106.4px;" width="5.960000000000001" height="4.4" viewBox="0 0 5.960000000000001 4.4"><path d="M1 1 L2.9800000000000004 3.4 L4.960000000000001 1" fill="none" stroke="#383838" stroke-width="1.25" stroke-linecap="round" stroke-linejoin="round"/></svg>
<svg class="a" style="left:904px;top:123.5px;" width="14" height="14" viewBox="0 0 14 14"><path d="M1 8.6 L8.6 1 L13 5.4 L5.4 13 z" fill="#f4f4f4" stroke="#c02f93" stroke-width="0.9" stroke-linejoin="round"/>
<path d="M1 8.6 L4.6 5 L9 9.4 L5.4 13 z" fill="#d63fa3" stroke="#c02f93" stroke-width="0.9" stroke-linejoin="round"/></svg>
<svg class="a" style="left:921.82px;top:128.4px;" width="5.960000000000001" height="4.4" viewBox="0 0 5.960000000000001 4.4"><path d="M1 1 L2.9800000000000004 3.4 L4.960000000000001 1" fill="none" stroke="#383838" stroke-width="1.25" stroke-linecap="round" stroke-linejoin="round"/></svg>
<span class="a t" style="left:948.00px;top:79.00px;line-height:16px;font-size:12.2px;color:#1e6fb8;">A</span>
<span class="a t" style="left:948.30px;top:91.00px;line-height:16px;font-size:12.2px;color:#555;">Z</span>
<svg class="a" style="left:957.6px;top:86px;" width="15" height="14.5" viewBox="0 0 15 14.5"><path d="M1 1 H14 L9.2 6.4 V12.6 L5.8 12.6 V6.4 z" fill="#ececec" stroke="#555" stroke-width="0.9" stroke-linejoin="round"/></svg>
<span class="a t" style="left:938.30px;top:109.00px;line-height:14px;font-size:10.5px;color:#2c2c2c;letter-spacing:-0.348px;">Ordenar y</span>
<span class="a t" style="left:944.00px;top:122.00px;line-height:14px;font-size:10.5px;color:#2c2c2c;letter-spacing:0.039px;">filtrar</span>
<svg class="a" style="left:970.61px;top:126.3px;" width="5.78" height="4.4" viewBox="0 0 5.78 4.4"><path d="M1 1 L2.89 3.4 L4.78 1" fill="none" stroke="#383838" stroke-width="1.25" stroke-linecap="round" stroke-linejoin="round"/></svg>
<svg class="a" style="left:1004px;top:79px;" width="27" height="27" viewBox="0 0 27 27"><path d="M10.6 16.6 L1.6 25.6" stroke="#555" stroke-width="1" stroke-linecap="round"/><circle cx="16.8" cy="10.2" r="8.8" fill="#dedede" stroke="#555" stroke-width="0.9"/></svg>
<span class="a t" style="left:999.30px;top:109.00px;line-height:14px;font-size:10.5px;color:#2c2c2c;letter-spacing:-0.480px;">Buscar y</span>
<span class="a t" style="left:988.50px;top:122.00px;line-height:14px;font-size:10.5px;color:#2c2c2c;letter-spacing:-0.365px;">seleccionar</span>
<svg class="a" style="left:1040.91px;top:126.3px;" width="5.78" height="4.4" viewBox="0 0 5.78 4.4"><path d="M1 1 L2.89 3.4 L4.78 1" fill="none" stroke="#383838" stroke-width="1.25" stroke-linecap="round" stroke-linejoin="round"/></svg>
<svg class="a" style="left:1093.8px;top:78.8px;" width="24" height="26" viewBox="0 0 24 26">
<path d="M1 4.6 H11 L18 11.6 V24.6 H1 z" fill="#dcdcdc"/>
<g transform="rotate(45 16 6)"><rect x="11" y="2.2" width="11" height="7.2" fill="#e4e4e4" stroke="#c0c0c0" stroke-width="0.6"/><rect x="13.6" y="-1" width="5.8" height="3.4" fill="#e4e4e4"/></g>
<g transform="rotate(45 9 14)"><rect x="4" y="12.2" width="10.4" height="3.8" rx="1" fill="none" stroke="#b4b4b4" stroke-width="0.9"/></g>
</svg>
<span class="a t" style="left:1065.80px;top:109.00px;line-height:14px;font-size:10.5px;color:#8c8c8c;letter-spacing:-0.135px;">Confidencialidad</span>
<svg class="a" style="left:1100.31px;top:125.65px;" width="5.78" height="4.3" viewBox="0 0 5.78 4.3"><path d="M1 1 L2.89 3.3 L4.78 1" fill="none" stroke="#8c8c8c" stroke-width="1.25" stroke-linecap="round" stroke-linejoin="round"/></svg>
<svg class="a" style="left:1182.4px;top:80px;" width="24.4" height="24.4" viewBox="0 0 24.4 24.4">
<rect x="0.6" y="0.6" width="23.2" height="23.2" fill="none" stroke="#a8a8a8" stroke-width="0.9"/>
<rect x="3.2" y="3.2" width="7.6" height="7.6" fill="none" stroke="#a8a8a8" stroke-width="0.9"/>
<rect x="13.6" y="3.2" width="7.6" height="7.6" fill="none" stroke="#a8a8a8" stroke-width="0.9"/>
<rect x="3.2" y="13.6" width="7.6" height="7.6" fill="none" stroke="#a8a8a8" stroke-width="0.9"/>
<rect x="13.6" y="13.6" width="7.6" height="7.6" fill="none" stroke="#a8a8a8" stroke-width="0.9"/>
</svg>
<span class="a t" style="left:1160.00px;top:109.00px;line-height:14px;font-size:10.5px;color:#8c8c8c;letter-spacing:-0.130px;">Complementos</span>
<svg class="a" style="left:1252.8px;top:80px;" width="24.4" height="24.4" viewBox="0 0 24.4 24.4">
<rect x="0.6" y="0.6" width="23.2" height="23.2" fill="#d4d4d4" stroke="#8a8a8a" stroke-width="0.9"/>
<path d="M0.6 4.4 h23.2 M0.6 11 h23.2 M0.6 17.6 h23.2 M8.4 4.4 v19.4 M16.2 4.4 v19.4" stroke="#9a9a9a" stroke-width="0.8" fill="none"/>
<path d="M17 15.8 L23.4 22.6" stroke="#8a8a8a" stroke-width="1.6"/>
<circle cx="11.6" cy="10.4" r="7.2" fill="#e6e6e6" stroke="#8a8a8a" stroke-width="0.9"/>
<path d="M8.2 13.4 v-3.6 h2.2 v3.6 M10.4 13.4 v-6.4 h2.4 v6.4 M12.8 13.4 v-4.6 h2.2 v4.6 M7.6 13.4 h8" fill="none" stroke="#8a8a8a" stroke-width="0.8"/>
</svg>
<span class="a t" style="left:1247.60px;top:109.00px;line-height:14px;font-size:10.5px;color:#8c8c8c;letter-spacing:-0.394px;">Analizar</span>
<span class="a t" style="left:1253.60px;top:122.00px;line-height:14px;font-size:10.5px;color:#8c8c8c;letter-spacing:-0.397px;">datos</span>
<svg class="a" style="left:1332.4px;top:81px;" width="23" height="25" viewBox="0 0 23 25"><path d="M17 11 V6 L12.4 1.2 H3.4 a2.4 2.4 0 0 0 -2.4 2.4 V18.6 a2.4 2.4 0 0 0 2.4 2.4 H8.6" fill="none" stroke="#2f69d4" stroke-width="1.05" stroke-linejoin="round"/>
<path d="M4.6 12.6 C7 10.6 8.4 7.6 8 6.4 C7.6 5.4 6.8 6.4 7.4 8 C8.2 10.2 10.2 11.8 12.4 11.8 C13.2 11.6 12.4 10.8 10.6 11 C8.6 11.2 6.4 11.8 4.6 12.6 z" fill="none" stroke="#2f69d4" stroke-width="0.75"/>
<g fill="none" stroke="#2f69d4" stroke-width="1.2" stroke-linecap="round"><path d="M13.6 18.4 l-1.8 1.8 a2.6 2.6 0 0 0 3.7 3.7 l1.8 -1.8"/><path d="M16.4 15.8 l1.8 -1.8 a2.6 2.6 0 0 1 3.7 3.7 l-1.8 1.8"/><path d="M14.8 20.8 l4.2 -4.2"/></g></svg>
<span class="a t" style="left:1315.30px;top:109.00px;line-height:14px;font-size:10.5px;color:#2c2c2c;letter-spacing:-0.634px;">Crear PDF y</span>
<span class="a t" style="left:1301.40px;top:122.00px;line-height:14px;font-size:10.5px;color:#2c2c2c;letter-spacing:-0.034px;">compartir vínculo</span>
<svg class="a" style="left:1427.8px;top:81px;" width="23" height="25" viewBox="0 0 23 25"><path d="M17 11 V6 L12.4 1.2 H3.4 a2.4 2.4 0 0 0 -2.4 2.4 V18.6 a2.4 2.4 0 0 0 2.4 2.4 H8.6" fill="none" stroke="#2f69d4" stroke-width="1.05" stroke-linejoin="round"/>
<path d="M4.6 12.6 C7 10.6 8.4 7.6 8 6.4 C7.6 5.4 6.8 6.4 7.4 8 C8.2 10.2 10.2 11.8 12.4 11.8 C13.2 11.6 12.4 10.8 10.6 11 C8.6 11.2 6.4 11.8 4.6 12.6 z" fill="none" stroke="#2f69d4" stroke-width="0.75"/>
<rect x="9.6" y="15.6" width="12.4" height="8.6" rx="1.2" fill="#c0c0c0" stroke="#2f69d4" stroke-width="1.05"/>
<path d="M10 16.4 L15.8 20.8 L21.6 16.4" fill="none" stroke="#2f69d4" stroke-width="0.95"/></svg>
<span class="a t" style="left:1387.00px;top:109.00px;line-height:14px;font-size:10.5px;color:#2c2c2c;letter-spacing:-0.342px;">Crear PDF y compartir</span>
<span class="a t" style="left:1408.40px;top:122.00px;line-height:14px;font-size:10.5px;color:#2c2c2c;letter-spacing:-0.050px;">con Outlook</span>
<svg class="a" style="left:1508.8px;top:78px;" width="28" height="28" viewBox="0 0 28 28">
<defs><linearGradient id="pg" x1="0" y1="0" x2="1" y2="1"><stop offset="0" stop-color="#8c8c8c"/><stop offset="0.45" stop-color="#3a3a3a"/><stop offset="1" stop-color="#747474"/></linearGradient></defs>
<path d="M0.6 0.6 H27.4 V15 H22 a3.6 3.6 0 0 0 -3.6 3.6 V27.4 H0.6 z" fill="url(#pg)"/>
<path d="M5 5 H23 V10.6 H19 a5.4 5.4 0 0 0 -5.4 5.4 V23 H5 z" fill="#c0c0c0"/>
</svg>
<span class="a t" style="left:1503.50px;top:109.00px;line-height:14px;font-size:10.5px;color:#8c8c8c;letter-spacing:-0.528px;">Personia</span>
<svg class="a" style="left:1604px;top:142.5px;" width="10" height="7" viewBox="0 0 10 7"><path d="M1.2 1.6 L5 5.4 L8.8 1.6" fill="none" stroke="#333" stroke-width="1.1" stroke-linecap="round" stroke-linejoin="round"/></svg>
<div class="a" style="left:14px;top:164.5px;width:86.4px;height:22px;background:#4b4b4b;border:1px solid #707070;box-sizing:border-box;border-radius:4px;"></div>
<span class="a t" style="left:20.50px;top:170.00px;line-height:14px;font-size:11px;color:#fff;letter-spacing:-1.033px;">B22</span>
<svg class="a" style="left:84.5px;top:172.3px;" width="10" height="7" viewBox="0 0 10 7"><path d="M1.2 1.6 L5 5.4 L8.8 1.6" fill="none" stroke="#e0e0e0" stroke-width="1.1" stroke-linecap="round" stroke-linejoin="round"/></svg>
<div class="a" style="left:108.4px;top:171.8px;width:1.6px;height:1.6px;background:#e8e8e8;"></div>
<div class="a" style="left:108.4px;top:175.2px;width:1.6px;height:1.6px;background:#e8e8e8;"></div>
<div class="a" style="left:108.4px;top:178.6px;width:1.6px;height:1.6px;background:#e8e8e8;"></div>
<div class="a" style="left:117.6px;top:164.5px;width:73px;height:22px;background:#4b4b4b;border:1px solid #707070;box-sizing:border-box;border-radius:4px;"></div>
<svg class="a" style="left:123.5px;top:170px;" width="11" height="11" viewBox="0 0 11 11"><path d="M1 1 L10 10 M10 1 L1 10" stroke="#8a8a8a" stroke-width="0.9"/></svg>
<svg class="a" style="left:141.5px;top:170px;" width="15" height="11" viewBox="0 0 15 11"><path d="M1 6 L5 10 L14 1" fill="none" stroke="#8a8a8a" stroke-width="0.9"/></svg>
<span class="a t" style="left:164.20px;top:166.00px;line-height:18px;font-size:13.5px;color:#f0f0f0;font-family:'Liberation Serif', serif;font-weight:700;font-style:italic;letter-spacing:-0.3px;">fx</span>
<svg class="a" style="left:179.5px;top:172.5px;" width="9" height="6" viewBox="0 0 9 6"><path d="M1 1.2 L4.5 4.6 L8 1.2" fill="none" stroke="#cfcfcf" stroke-width="1" stroke-linecap="round" stroke-linejoin="round"/></svg>
<div class="a" style="left:194.6px;top:164.5px;width:1426.6px;height:22px;background:#4b4b4b;border:1px solid #707070;box-sizing:border-box;border-radius:4px;"></div>
<svg class="a" style="left:1608px;top:171px;" width="11" height="7" viewBox="0 0 11 7"><path d="M1.2 1.4 L5.5 5.6 L9.8 1.4" fill="none" stroke="#e0e0e0" stroke-width="1.1" stroke-linecap="round" stroke-linejoin="round"/></svg>
<div class="a" style="left:7px;top:192px;width:1602.4px;height:264px;background:#fff;overflow:hidden;">
<div class="a" style="left:0px;top:0px;width:1602.4px;height:15px;background:#525252;"></div>
<div class="a" style="left:74.5px;top:0px;width:105.5px;height:14px;background:#646464;"></div>
<div class="a" style="left:74.5px;top:13.8px;width:105.5px;height:1.2px;background:#1f8a4c;"></div>
<svg class="a" style="left:11px;top:3.4px;" width="9" height="9" viewBox="0 0 9 9"><path d="M8.4 0.6 V8.6 H0.4 z" fill="#e6e6e6"/></svg>
<div class="a" style="left:21.6px;top:0.8px;width:1px;height:13.2px;background:#a6a6a6;"></div>
<span class="a t" style="left:45.08px;top:1.00px;line-height:15px;font-size:11.3px;color:#fff;">A</span>
<div class="a" style="left:74.1px;top:0.8px;width:1px;height:13.2px;background:#a6a6a6;"></div>
<span class="a t" style="left:124.08px;top:1.00px;line-height:15px;font-size:11.3px;color:#fff;">B</span>
<div class="a" style="left:179.6px;top:0.8px;width:1px;height:13.2px;background:#a6a6a6;"></div>
<span class="a t" style="left:218.01px;top:1.00px;line-height:15px;font-size:11.3px;color:#fff;">C</span>
<div class="a" style="left:262.6px;top:0.8px;width:1px;height:13.2px;background:#a6a6a6;"></div>
<span class="a t" style="left:302.26px;top:1.00px;line-height:15px;font-size:11.3px;color:#fff;">D</span>
<div class="a" style="left:348.1px;top:0.8px;width:1px;height:13.2px;background:#a6a6a6;"></div>
<span class="a t" style="left:401.33px;top:1.00px;line-height:15px;font-size:11.3px;color:#fff;">E</span>
<div class="a" style="left:460.1px;top:0.8px;width:1px;height:13.2px;background:#a6a6a6;"></div>
<span class="a t" style="left:506.65px;top:1.00px;line-height:15px;font-size:11.3px;color:#fff;">F</span>
<div class="a" style="left:558.1px;top:0.8px;width:1px;height:13.2px;background:#a6a6a6;"></div>
<span class="a t" style="left:603.95px;top:1.00px;line-height:15px;font-size:11.3px;color:#fff;">G</span>
<div class="a" style="left:656.6px;top:0.8px;width:1px;height:13.2px;background:#a6a6a6;"></div>
<span class="a t" style="left:704.26px;top:1.00px;line-height:15px;font-size:11.3px;color:#fff;">H</span>
<div class="a" style="left:758.1px;top:0.8px;width:1px;height:13.2px;background:#a6a6a6;"></div>
<span class="a t" style="left:803.53px;top:1.00px;line-height:15px;font-size:11.3px;color:#fff;">I</span>
<div class="a" style="left:850.1px;top:0.8px;width:1px;height:13.2px;background:#a6a6a6;"></div>
<span class="a t" style="left:895.02px;top:1.00px;line-height:15px;font-size:11.3px;color:#fff;">J</span>
<div class="a" style="left:943.6px;top:0.8px;width:1px;height:13.2px;background:#a6a6a6;"></div>
<span class="a t" style="left:994.71px;top:1.00px;line-height:15px;font-size:11.3px;color:#fff;">K</span>
<div class="a" style="left:1051.35px;top:0.8px;width:1px;height:13.2px;background:#a6a6a6;"></div>
<span class="a t" style="left:1090.32px;top:1.00px;line-height:15px;font-size:11.3px;color:#fff;">L</span>
<div class="a" style="left:1133.6px;top:0.8px;width:1px;height:13.2px;background:#a6a6a6;"></div>
<span class="a t" style="left:1195.14px;top:1.00px;line-height:15px;font-size:11.3px;color:#fff;">M</span>
<div class="a" style="left:1264.1px;top:0.8px;width:1px;height:13.2px;background:#a6a6a6;"></div>
<span class="a t" style="left:1305.38px;top:1.00px;line-height:15px;font-size:11.3px;color:#fff;">N</span>
<div class="a" style="left:1352.85px;top:0.8px;width:1px;height:13.2px;background:#a6a6a6;"></div>
<span class="a t" style="left:1407.32px;top:1.00px;line-height:15px;font-size:11.3px;color:#fff;">O</span>
<div class="a" style="left:1468.6px;top:0.8px;width:1px;height:13.2px;background:#a6a6a6;"></div>
<span class="a t" style="left:1513.08px;top:1.00px;line-height:15px;font-size:11.3px;color:#fff;">P</span>
<div class="a" style="left:1563.1px;top:0.8px;width:1px;height:13.2px;background:#a6a6a6;"></div>
<div class="a" style="left:0px;top:15px;width:22px;height:249px;background:#525252;"></div>
<div class="a" style="left:21px;top:1px;width:1px;height:14px;background:#9a9a9a;"></div>
<div class="a" style="left:21px;top:15px;width:1px;height:249px;background:#5e5e5e;"></div>
<div class="a" style="left:0px;top:14px;width:22px;height:1px;background:#9a9a9a;"></div>
<div class="a" style="left:0px;top:29px;width:21px;height:1px;background:#8f8f8f;"></div>
<span class="a t" style="left:7.57px;top:17.00px;line-height:14px;font-size:10.9px;color:#fff;letter-spacing:-0.2px;">1</span>
<div class="a" style="left:0px;top:44px;width:21px;height:1px;background:#8f8f8f;"></div>
<span class="a t" style="left:7.57px;top:32.00px;line-height:14px;font-size:10.9px;color:#fff;letter-spacing:-0.2px;">2</span>
<div class="a" style="left:0px;top:60px;width:21px;height:1px;background:#8f8f8f;"></div>
<span class="a t" style="left:7.57px;top:48.00px;line-height:14px;font-size:10.9px;color:#fff;letter-spacing:-0.2px;">3</span>
<div class="a" style="left:0px;top:75px;width:21px;height:1px;background:#8f8f8f;"></div>
<span class="a t" style="left:7.57px;top:63.00px;line-height:14px;font-size:10.9px;color:#fff;letter-spacing:-0.2px;">4</span>
<div class="a" style="left:0px;top:103px;width:21px;height:1px;background:#8f8f8f;"></div>
<span class="a t" style="left:7.57px;top:91.00px;line-height:14px;font-size:10.9px;color:#fff;letter-spacing:-0.2px;">5</span>
<div class="a" style="left:0px;top:120px;width:21px;height:1px;background:#8f8f8f;"></div>
<span class="a t" style="left:7.57px;top:108.00px;line-height:14px;font-size:10.9px;color:#fff;letter-spacing:-0.2px;">6</span>
<div class="a" style="left:0px;top:137px;width:21px;height:1px;background:#8f8f8f;"></div>
<span class="a t" style="left:7.57px;top:125.00px;line-height:14px;font-size:10.9px;color:#fff;letter-spacing:-0.2px;">7</span>
<div class="a" style="left:0px;top:154px;width:21px;height:1px;background:#8f8f8f;"></div>
<span class="a t" style="left:7.57px;top:142.00px;line-height:14px;font-size:10.9px;color:#fff;letter-spacing:-0.2px;">8</span>
<div class="a" style="left:0px;top:171px;width:21px;height:1px;background:#8f8f8f;"></div>
<span class="a t" style="left:7.57px;top:159.00px;line-height:14px;font-size:10.9px;color:#fff;letter-spacing:-0.2px;">9</span>
<div class="a" style="left:0px;top:188px;width:21px;height:1px;background:#8f8f8f;"></div>
<span class="a t" style="left:4.54px;top:176.00px;line-height:14px;font-size:10.9px;color:#fff;letter-spacing:-0.2px;">10</span>
<div class="a" style="left:0px;top:205px;width:21px;height:1px;background:#8f8f8f;"></div>
<span class="a t" style="left:4.94px;top:193.00px;line-height:14px;font-size:10.9px;color:#fff;letter-spacing:-0.2px;">11</span>
<div class="a" style="left:0px;top:222px;width:21px;height:1px;background:#8f8f8f;"></div>
<span class="a t" style="left:4.54px;top:210.00px;line-height:14px;font-size:10.9px;color:#fff;letter-spacing:-0.2px;">12</span>
<div class="a" style="left:0px;top:239px;width:21px;height:1px;background:#8f8f8f;"></div>
<span class="a t" style="left:4.54px;top:227.00px;line-height:14px;font-size:10.9px;color:#fff;letter-spacing:-0.2px;">13</span>
<div class="a" style="left:0px;top:254px;width:21px;height:1px;background:#8f8f8f;"></div>
<span class="a t" style="left:4.54px;top:242.00px;line-height:14px;font-size:10.9px;color:#fff;letter-spacing:-0.2px;">14</span>
<div class="a" style="left:0px;top:270px;width:21px;height:1px;background:#8f8f8f;"></div>
<span class="a t" style="left:4.54px;top:258.00px;line-height:14px;font-size:10.9px;color:#fff;letter-spacing:-0.2px;">15</span>
<div class="a" style="left:22px;top:76px;width:1580.4px;height:27px;background:#f0f0f0;"></div>
<div class="a" style="left:22px;top:75px;width:1580.4px;height:1px;background:#86cdee;"></div>
<span class="a t" style="left:23.90px;top:78.00px;line-height:12px;font-size:9.4px;color:#80766c;font-family:'DejaVu Sans Condensed', 'DejaVu Sans', sans-serif;font-weight:700;letter-spacing:-0.073px;">Código</span>
<span class="a t" style="left:76.30px;top:78.00px;line-height:12px;font-size:9.4px;color:#80766c;font-family:'DejaVu Sans Condensed', 'DejaVu Sans', sans-serif;font-weight:700;letter-spacing:0.053px;">Estatus empleado</span>
<span class="a t" style="left:181.80px;top:78.00px;line-height:12px;font-size:9.4px;color:#80766c;font-family:'DejaVu Sans Condensed', 'DejaVu Sans', sans-serif;font-weight:700;letter-spacing:-0.076px;">Fecha de alta</span>
<span class="a t" style="left:265.00px;top:78.00px;line-height:12px;font-size:9.4px;color:#80766c;font-family:'DejaVu Sans Condensed', 'DejaVu Sans', sans-serif;font-weight:700;letter-spacing:-0.010px;">Fecha de baja</span>
<span class="a t" style="left:350.60px;top:78.00px;line-height:12px;font-size:9.4px;color:#80766c;font-family:'DejaVu Sans Condensed', 'DejaVu Sans', sans-serif;font-weight:700;letter-spacing:0.025px;">Fecha de reingreso</span>
<span class="a t" style="left:462.50px;top:78.00px;line-height:12px;font-size:9.4px;color:#80766c;font-family:'DejaVu Sans Condensed', 'DejaVu Sans', sans-serif;font-weight:700;">Tipo de contrato</span>
<span class="a t" style="left:561.00px;top:78.00px;line-height:12px;font-size:9.4px;color:#80766c;font-family:'DejaVu Sans Condensed', 'DejaVu Sans', sans-serif;font-weight:700;letter-spacing:-0.039px;">Apellido paterno</span>
<span class="a t" style="left:659.30px;top:78.00px;line-height:12px;font-size:9.4px;color:#80766c;font-family:'DejaVu Sans Condensed', 'DejaVu Sans', sans-serif;font-weight:700;letter-spacing:0.011px;">Apellido materno</span>
<span class="a t" style="left:761.00px;top:78.00px;line-height:12px;font-size:9.4px;color:#80766c;font-family:'DejaVu Sans Condensed', 'DejaVu Sans', sans-serif;font-weight:700;letter-spacing:-0.075px;">Nombre</span>
<span class="a t" style="left:852.60px;top:78.00px;line-height:12px;font-size:9.4px;color:#80766c;font-family:'DejaVu Sans Condensed', 'DejaVu Sans', sans-serif;font-weight:700;letter-spacing:-0.040px;">Tipo de periodo</span>
<span class="a t" style="left:946.00px;top:78.00px;line-height:12px;font-size:9.4px;color:#80766c;font-family:'DejaVu Sans Condensed', 'DejaVu Sans', sans-serif;font-weight:700;letter-spacing:-0.035px;">Base de cotización</span>
<span class="a t" style="left:1053.70px;top:78.00px;line-height:12px;font-size:9.4px;color:#80766c;font-family:'DejaVu Sans Condensed', 'DejaVu Sans', sans-serif;font-weight:700;letter-spacing:-0.078px;">Salario diario</span>
<span class="a t" style="left:1136.00px;top:78.00px;line-height:12px;font-size:9.4px;color:#80766c;font-family:'DejaVu Sans Condensed', 'DejaVu Sans', sans-serif;font-weight:700;letter-spacing:-0.055px;">Fecha del salario diario</span>
<span class="a t" style="left:1266.50px;top:78.00px;line-height:12px;font-size:9.4px;color:#80766c;font-family:'DejaVu Sans Condensed', 'DejaVu Sans', sans-serif;font-weight:700;letter-spacing:-0.071px;">SBC parte fija</span>
<span class="a t" style="left:1355.60px;top:78.00px;line-height:12px;font-size:9.4px;color:#80766c;font-family:'DejaVu Sans Condensed', 'DejaVu Sans', sans-serif;font-weight:700;letter-spacing:-0.061px;">Fecha SBC parte fija</span>
<span class="a t" style="left:1471.00px;top:78.00px;line-height:12px;font-size:9.4px;color:#80766c;font-family:'DejaVu Sans Condensed', 'DejaVu Sans', sans-serif;font-weight:700;letter-spacing:-0.013px;">Salario variable</span>
<span class="a t" style="left:1566.10px;top:78.00px;line-height:12px;font-size:9.4px;color:#80766c;font-family:'DejaVu Sans Condensed', 'DejaVu Sans', sans-serif;font-weight:700;letter-spacing:-0.193px;">Fecha salario variable</span>
<div class="a" style="left:60.1px;top:88.1px;width:13.8px;height:14.2px;background:linear-gradient(#ffffff,#eef0f2);border:1px solid #b2b2b2;box-sizing:border-box;border-radius:1.5px;"></div>
<svg class="a" style="left:63.9px;top:93.6px;" width="7" height="4.4" viewBox="0 0 7 4.4"><path d="M0.4 0.6 H6.6 L3.5 3.8 z" fill="#505050"/></svg>
<div class="a" style="left:165.6px;top:88.1px;width:13.8px;height:14.2px;background:linear-gradient(#ffffff,#eef0f2);border:1px solid #b2b2b2;box-sizing:border-box;border-radius:1.5px;"></div>
<svg class="a" style="left:169.4px;top:93.6px;" width="7" height="4.4" viewBox="0 0 7 4.4"><path d="M0.4 0.6 H6.6 L3.5 3.8 z" fill="#505050"/></svg>
<div class="a" style="left:248.6px;top:88.1px;width:13.8px;height:14.2px;background:linear-gradient(#ffffff,#eef0f2);border:1px solid #b2b2b2;box-sizing:border-box;border-radius:1.5px;"></div>
<svg class="a" style="left:252.4px;top:93.6px;" width="7" height="4.4" viewBox="0 0 7 4.4"><path d="M0.4 0.6 H6.6 L3.5 3.8 z" fill="#505050"/></svg>
<div class="a" style="left:334.1px;top:88.1px;width:13.8px;height:14.2px;background:linear-gradient(#ffffff,#eef0f2);border:1px solid #b2b2b2;box-sizing:border-box;border-radius:1.5px;"></div>
<svg class="a" style="left:337.9px;top:93.6px;" width="7" height="4.4" viewBox="0 0 7 4.4"><path d="M0.4 0.6 H6.6 L3.5 3.8 z" fill="#505050"/></svg>
<div class="a" style="left:446.1px;top:88.1px;width:13.8px;height:14.2px;background:linear-gradient(#ffffff,#eef0f2);border:1px solid #b2b2b2;box-sizing:border-box;border-radius:1.5px;"></div>
<svg class="a" style="left:449.9px;top:93.6px;" width="7" height="4.4" viewBox="0 0 7 4.4"><path d="M0.4 0.6 H6.6 L3.5 3.8 z" fill="#505050"/></svg>
<div class="a" style="left:544.1px;top:88.1px;width:13.8px;height:14.2px;background:linear-gradient(#ffffff,#eef0f2);border:1px solid #b2b2b2;box-sizing:border-box;border-radius:1.5px;"></div>
<svg class="a" style="left:547.9px;top:93.6px;" width="7" height="4.4" viewBox="0 0 7 4.4"><path d="M0.4 0.6 H6.6 L3.5 3.8 z" fill="#505050"/></svg>
<div class="a" style="left:642.6px;top:88.1px;width:13.8px;height:14.2px;background:linear-gradient(#ffffff,#eef0f2);border:1px solid #b2b2b2;box-sizing:border-box;border-radius:1.5px;"></div>
<svg class="a" style="left:646.4px;top:93.6px;" width="7" height="4.4" viewBox="0 0 7 4.4"><path d="M0.4 0.6 H6.6 L3.5 3.8 z" fill="#505050"/></svg>
<div class="a" style="left:744.1px;top:88.1px;width:13.8px;height:14.2px;background:linear-gradient(#ffffff,#eef0f2);border:1px solid #b2b2b2;box-sizing:border-box;border-radius:1.5px;"></div>
<svg class="a" style="left:747.9px;top:93.6px;" width="7" height="4.4" viewBox="0 0 7 4.4"><path d="M0.4 0.6 H6.6 L3.5 3.8 z" fill="#505050"/></svg>
<div class="a" style="left:836.1px;top:88.1px;width:13.8px;height:14.2px;background:linear-gradient(#ffffff,#eef0f2);border:1px solid #b2b2b2;box-sizing:border-box;border-radius:1.5px;"></div>
<svg class="a" style="left:839.9px;top:93.6px;" width="7" height="4.4" viewBox="0 0 7 4.4"><path d="M0.4 0.6 H6.6 L3.5 3.8 z" fill="#505050"/></svg>
<div class="a" style="left:929.6px;top:88.1px;width:13.8px;height:14.2px;background:linear-gradient(#ffffff,#eef0f2);border:1px solid #b2b2b2;box-sizing:border-box;border-radius:1.5px;"></div>
<svg class="a" style="left:933.4px;top:93.6px;" width="7" height="4.4" viewBox="0 0 7 4.4"><path d="M0.4 0.6 H6.6 L3.5 3.8 z" fill="#505050"/></svg>
<div class="a" style="left:1037.35px;top:88.1px;width:13.8px;height:14.2px;background:linear-gradient(#ffffff,#eef0f2);border:1px solid #b2b2b2;box-sizing:border-box;border-radius:1.5px;"></div>
<svg class="a" style="left:1041.15px;top:93.6px;" width="7" height="4.4" viewBox="0 0 7 4.4"><path d="M0.4 0.6 H6.6 L3.5 3.8 z" fill="#505050"/></svg>
<div class="a" style="left:1119.6px;top:88.1px;width:13.8px;height:14.2px;background:linear-gradient(#ffffff,#eef0f2);border:1px solid #b2b2b2;box-sizing:border-box;border-radius:1.5px;"></div>
<svg class="a" style="left:1123.4px;top:93.6px;" width="7" height="4.4" viewBox="0 0 7 4.4"><path d="M0.4 0.6 H6.6 L3.5 3.8 z" fill="#505050"/></svg>
<div class="a" style="left:1250.1px;top:88.1px;width:13.8px;height:14.2px;background:linear-gradient(#ffffff,#eef0f2);border:1px solid #b2b2b2;box-sizing:border-box;border-radius:1.5px;"></div>
<svg class="a" style="left:1253.9px;top:93.6px;" width="7" height="4.4" viewBox="0 0 7 4.4"><path d="M0.4 0.6 H6.6 L3.5 3.8 z" fill="#505050"/></svg>
<div class="a" style="left:1338.85px;top:88.1px;width:13.8px;height:14.2px;background:linear-gradient(#ffffff,#eef0f2);border:1px solid #b2b2b2;box-sizing:border-box;border-radius:1.5px;"></div>
<svg class="a" style="left:1342.65px;top:93.6px;" width="7" height="4.4" viewBox="0 0 7 4.4"><path d="M0.4 0.6 H6.6 L3.5 3.8 z" fill="#505050"/></svg>
<div class="a" style="left:1454.6px;top:88.1px;width:13.8px;height:14.2px;background:linear-gradient(#ffffff,#eef0f2);border:1px solid #b2b2b2;box-sizing:border-box;border-radius:1.5px;"></div>
<svg class="a" style="left:1458.4px;top:93.6px;" width="7" height="4.4" viewBox="0 0 7 4.4"><path d="M0.4 0.6 H6.6 L3.5 3.8 z" fill="#505050"/></svg>
<div class="a" style="left:1549.1px;top:88.1px;width:13.8px;height:14.2px;background:linear-gradient(#ffffff,#eef0f2);border:1px solid #b2b2b2;box-sizing:border-box;border-radius:1.5px;"></div>
<svg class="a" style="left:1552.9px;top:93.6px;" width="7" height="4.4" viewBox="0 0 7 4.4"><path d="M0.4 0.6 H6.6 L3.5 3.8 z" fill="#505050"/></svg>
<div class="a" style="left:22px;top:104px;width:52.5px;height:16px;background:#c0e4f5;"></div>
<div class="a" style="left:74.5px;top:104px;width:386.0px;height:16px;background:#dcdcdc;"></div>
<div class="a" style="left:460.5px;top:104px;width:390.0px;height:16px;background:#c0e4f5;"></div>
<div class="a" style="left:850.5px;top:104px;width:93.5px;height:16px;background:#dcdcdc;"></div>
<div class="a" style="left:944px;top:104px;width:107.75px;height:16px;background:#c0e4f5;"></div>
<div class="a" style="left:1051.75px;top:104px;width:550.75px;height:16px;background:#dcdcdc;"></div>
<div class="a" style="left:22px;top:120px;width:1580.4px;height:1px;background:#76c2ea;"></div>
<span class="a t" style="left:24.20px;top:106.00px;line-height:12px;font-size:9.6px;color:#111;letter-spacing:-0.25px;">001</span>
<svg class="a" style="left:22px;top:104px;" width="6" height="6" viewBox="0 0 6 6"><path d="M0 0 H5.2 L0 5.2 z" fill="#1d8a2c"/></svg>
<span class="a t" style="left:76.70px;top:106.00px;line-height:12px;font-size:9.6px;color:#808080;letter-spacing:-0.25px;">A</span>
<span class="a t" style="left:182.20px;top:106.00px;line-height:12px;font-size:9.6px;color:#808080;letter-spacing:-0.223px;">01/01/2024</span>
<span class="a t" style="left:265.20px;top:106.00px;line-height:12px;font-size:9.6px;color:#808080;letter-spacing:-0.223px;">30/12/1899</span>
<span class="a t" style="left:350.70px;top:106.00px;line-height:12px;font-size:9.6px;color:#808080;letter-spacing:-0.223px;">30/12/1899</span>
<span class="a t" style="left:462.70px;top:106.00px;line-height:12px;font-size:9.6px;color:#111;letter-spacing:-0.25px;">01</span>
<svg class="a" style="left:460.5px;top:104px;" width="6" height="6" viewBox="0 0 6 6"><path d="M0 0 H5.2 L0 5.2 z" fill="#1d8a2c"/></svg>
<span class="a t" style="left:560.70px;top:106.00px;line-height:12px;font-size:9.6px;color:#111;letter-spacing:-0.915px;">LOPEZ</span>
<span class="a t" style="left:659.20px;top:106.00px;line-height:12px;font-size:9.6px;color:#111;letter-spacing:-0.502px;">GONZALEZ</span>
<span class="a t" style="left:760.70px;top:106.00px;line-height:12px;font-size:9.6px;color:#111;letter-spacing:-0.452px;">CLAUDIA VIRIDIANA</span>
<span class="a t" style="left:852.70px;top:106.00px;line-height:12px;font-size:9.6px;color:#808080;letter-spacing:-0.241px;">Mensual</span>
<span class="a t" style="left:946.20px;top:106.00px;line-height:12px;font-size:9.6px;color:#111;letter-spacing:-0.25px;">F</span>
<span class="a t" style="left:1053.95px;top:106.00px;line-height:12px;font-size:9.6px;color:#808080;letter-spacing:-0.25px;">250</span>
<svg class="a" style="left:1051.75px;top:104px;" width="6" height="6" viewBox="0 0 6 6"><path d="M0 0 H5.2 L0 5.2 z" fill="#1d8a2c"/></svg>
<span class="a t" style="left:1136.20px;top:106.00px;line-height:12px;font-size:9.6px;color:#808080;letter-spacing:-0.223px;">01/01/2024</span>
<span class="a t" style="left:1266.70px;top:106.00px;line-height:12px;font-size:9.6px;color:#808080;letter-spacing:-0.266px;">262.328767123288</span>
<svg class="a" style="left:1264.5px;top:104px;" width="6" height="6" viewBox="0 0 6 6"><path d="M0 0 H5.2 L0 5.2 z" fill="#1d8a2c"/></svg>
<span class="a t" style="left:1355.45px;top:106.00px;line-height:12px;font-size:9.6px;color:#808080;letter-spacing:-0.223px;">01/01/2024</span>
<span class="a t" style="left:1471.20px;top:106.00px;line-height:12px;font-size:9.6px;color:#808080;letter-spacing:-0.25px;">0</span>
<svg class="a" style="left:1469px;top:104px;" width="6" height="6" viewBox="0 0 6 6"><path d="M0 0 H5.2 L0 5.2 z" fill="#1d8a2c"/></svg>
<span class="a t" style="left:1565.70px;top:106.00px;line-height:12px;font-size:9.6px;color:#808080;letter-spacing:-0.223px;">01/01/2024</span>
<div class="a" style="left:1051.75px;top:121px;width:82.25px;height:16px;background:#fcdcab;"></div>
<div class="a" style="left:1469px;top:121px;width:94.5px;height:16px;background:#fcdcab;"></div>
<div class="a" style="left:22px;top:137px;width:1580.4px;height:1px;background:#76c2ea;"></div>
<span class="a t" style="left:24.20px;top:123.00px;line-height:12px;font-size:9.6px;color:#111;letter-spacing:-0.25px;">002</span>
<svg class="a" style="left:22px;top:121px;" width="6" height="6" viewBox="0 0 6 6"><path d="M0 0 H5.2 L0 5.2 z" fill="#1d8a2c"/></svg>
<span class="a t" style="left:76.70px;top:123.00px;line-height:12px;font-size:9.6px;color:#111;letter-spacing:-0.25px;">A</span>
<span class="a t" style="left:182.20px;top:123.00px;line-height:12px;font-size:9.6px;color:#111;letter-spacing:-0.223px;">24/08/2022</span>
<span class="a t" style="left:265.20px;top:123.00px;line-height:12px;font-size:9.6px;color:#111;letter-spacing:-0.223px;">30/12/1899</span>
<span class="a t" style="left:350.70px;top:123.00px;line-height:12px;font-size:9.6px;color:#111;letter-spacing:-0.223px;">30/12/1899</span>
<span class="a t" style="left:462.70px;top:123.00px;line-height:12px;font-size:9.6px;color:#111;letter-spacing:-0.25px;">01</span>
<svg class="a" style="left:460.5px;top:121px;" width="6" height="6" viewBox="0 0 6 6"><path d="M0 0 H5.2 L0 5.2 z" fill="#1d8a2c"/></svg>
<span class="a t" style="left:852.70px;top:123.00px;line-height:12px;font-size:9.6px;color:#111;letter-spacing:-0.235px;">Quincenal</span>
<span class="a t" style="left:946.20px;top:123.00px;line-height:12px;font-size:9.6px;color:#111;letter-spacing:-0.25px;">F</span>
<span class="a t" style="left:1136.20px;top:123.00px;line-height:12px;font-size:9.6px;color:#111;letter-spacing:-0.223px;">24/08/2022</span>
<span class="a t" style="left:1266.70px;top:123.00px;line-height:12px;font-size:9.6px;color:#111;letter-spacing:-0.366px;">372.67</span>
<svg class="a" style="left:1264.5px;top:121px;" width="6" height="6" viewBox="0 0 6 6"><path d="M0 0 H5.2 L0 5.2 z" fill="#1d8a2c"/></svg>
<span class="a t" style="left:1355.45px;top:123.00px;line-height:12px;font-size:9.6px;color:#111;letter-spacing:-0.223px;">24/08/2022</span>
<span class="a t" style="left:1565.70px;top:123.00px;line-height:12px;font-size:9.6px;color:#111;letter-spacing:-0.223px;">24/08/2022</span>
<div class="a" style="left:22px;top:138px;width:1580.4px;height:16px;background:#c0e4f5;"></div>
<div class="a" style="left:1051.75px;top:138px;width:82.25px;height:16px;background:#fcdcab;"></div>
<div class="a" style="left:1469px;top:138px;width:94.5px;height:16px;background:#fcdcab;"></div>
<div class="a" style="left:22px;top:154px;width:1580.4px;height:1px;background:#76c2ea;"></div>
<span class="a t" style="left:24.20px;top:140.00px;line-height:12px;font-size:9.6px;color:#111;letter-spacing:-0.25px;">003</span>
<svg class="a" style="left:22px;top:138px;" width="6" height="6" viewBox="0 0 6 6"><path d="M0 0 H5.2 L0 5.2 z" fill="#1d8a2c"/></svg>
<span class="a t" style="left:76.70px;top:140.00px;line-height:12px;font-size:9.6px;color:#111;letter-spacing:-0.25px;">A</span>
<span class="a t" style="left:182.20px;top:140.00px;line-height:12px;font-size:9.6px;color:#111;letter-spacing:-0.223px;">14/07/2022</span>
<span class="a t" style="left:265.20px;top:140.00px;line-height:12px;font-size:9.6px;color:#111;letter-spacing:-0.223px;">30/12/1899</span>
<span class="a t" style="left:350.70px;top:140.00px;line-height:12px;font-size:9.6px;color:#111;letter-spacing:-0.223px;">30/12/1899</span>
<span class="a t" style="left:462.70px;top:140.00px;line-height:12px;font-size:9.6px;color:#111;letter-spacing:-0.25px;">01</span>
<svg class="a" style="left:460.5px;top:138px;" width="6" height="6" viewBox="0 0 6 6"><path d="M0 0 H5.2 L0 5.2 z" fill="#1d8a2c"/></svg>
<span class="a t" style="left:852.70px;top:140.00px;line-height:12px;font-size:9.6px;color:#111;letter-spacing:-0.235px;">Quincenal</span>
<span class="a t" style="left:946.20px;top:140.00px;line-height:12px;font-size:9.6px;color:#111;letter-spacing:-0.25px;">F</span>
<span class="a t" style="left:1136.20px;top:140.00px;line-height:12px;font-size:9.6px;color:#111;letter-spacing:-0.223px;">14/07/2022</span>
<span class="a t" style="left:1266.70px;top:140.00px;line-height:12px;font-size:9.6px;color:#111;letter-spacing:-0.366px;">372.67</span>
<svg class="a" style="left:1264.5px;top:138px;" width="6" height="6" viewBox="0 0 6 6"><path d="M0 0 H5.2 L0 5.2 z" fill="#1d8a2c"/></svg>
<span class="a t" style="left:1355.45px;top:140.00px;line-height:12px;font-size:9.6px;color:#111;letter-spacing:-0.223px;">14/07/2022</span>
<span class="a t" style="left:1565.70px;top:140.00px;line-height:12px;font-size:9.6px;color:#111;letter-spacing:-0.223px;">14/07/2022</span>
<div class="a" style="left:1051.75px;top:155px;width:82.25px;height:16px;background:#fcdcab;"></div>
<div class="a" style="left:1469px;top:155px;width:94.5px;height:16px;background:#fcdcab;"></div>
<div class="a" style="left:22px;top:171px;width:1580.4px;height:1px;background:#76c2ea;"></div>
<span class="a t" style="left:24.20px;top:157.00px;line-height:12px;font-size:9.6px;color:#111;letter-spacing:-0.25px;">004</span>
<svg class="a" style="left:22px;top:155px;" width="6" height="6" viewBox="0 0 6 6"><path d="M0 0 H5.2 L0 5.2 z" fill="#1d8a2c"/></svg>
<span class="a t" style="left:76.70px;top:157.00px;line-height:12px;font-size:9.6px;color:#111;letter-spacing:-0.25px;">A</span>
<span class="a t" style="left:182.20px;top:157.00px;line-height:12px;font-size:9.6px;color:#111;letter-spacing:-0.223px;">07/07/2022</span>
<span class="a t" style="left:265.20px;top:157.00px;line-height:12px;font-size:9.6px;color:#111;letter-spacing:-0.223px;">30/12/1899</span>
<span class="a t" style="left:350.70px;top:157.00px;line-height:12px;font-size:9.6px;color:#111;letter-spacing:-0.223px;">30/12/1899</span>
<span class="a t" style="left:462.70px;top:157.00px;line-height:12px;font-size:9.6px;color:#111;letter-spacing:-0.25px;">01</span>
<svg class="a" style="left:460.5px;top:155px;" width="6" height="6" viewBox="0 0 6 6"><path d="M0 0 H5.2 L0 5.2 z" fill="#1d8a2c"/></svg>
<span class="a t" style="left:852.70px;top:157.00px;line-height:12px;font-size:9.6px;color:#111;letter-spacing:-0.235px;">Quincenal</span>
<span class="a t" style="left:946.20px;top:157.00px;line-height:12px;font-size:9.6px;color:#111;letter-spacing:-0.25px;">F</span>
<span class="a t" style="left:1136.20px;top:157.00px;line-height:12px;font-size:9.6px;color:#111;letter-spacing:-0.223px;">07/07/2022</span>
<span class="a t" style="left:1266.70px;top:157.00px;line-height:12px;font-size:9.6px;color:#111;letter-spacing:-0.366px;">372.67</span>
<svg class="a" style="left:1264.5px;top:155px;" width="6" height="6" viewBox="0 0 6 6"><path d="M0 0 H5.2 L0 5.2 z" fill="#1d8a2c"/></svg>
<span class="a t" style="left:1355.45px;top:157.00px;line-height:12px;font-size:9.6px;color:#111;letter-spacing:-0.223px;">07/07/2022</span>
<span class="a t" style="left:1565.70px;top:157.00px;line-height:12px;font-size:9.6px;color:#111;letter-spacing:-0.223px;">07/07/2022</span>
<div class="a" style="left:22px;top:172px;width:1580.4px;height:16px;background:#c0e4f5;"></div>
<div class="a" style="left:1051.75px;top:172px;width:82.25px;height:16px;background:#fcdcab;"></div>
<div class="a" style="left:1469px;top:172px;width:94.5px;height:16px;background:#fcdcab;"></div>
<div class="a" style="left:22px;top:188px;width:1580.4px;height:1px;background:#76c2ea;"></div>
<span class="a t" style="left:24.20px;top:174.00px;line-height:12px;font-size:9.6px;color:#111;letter-spacing:-0.25px;">005</span>
<svg class="a" style="left:22px;top:172px;" width="6" height="6" viewBox="0 0 6 6"><path d="M0 0 H5.2 L0 5.2 z" fill="#1d8a2c"/></svg>
<span class="a t" style="left:76.70px;top:174.00px;line-height:12px;font-size:9.6px;color:#111;letter-spacing:-0.25px;">A</span>
<span class="a t" style="left:182.20px;top:174.00px;line-height:12px;font-size:9.6px;color:#111;letter-spacing:-0.223px;">05/07/2022</span>
<span class="a t" style="left:265.20px;top:174.00px;line-height:12px;font-size:9.6px;color:#111;letter-spacing:-0.223px;">30/12/1899</span>
<span class="a t" style="left:350.70px;top:174.00px;line-height:12px;font-size:9.6px;color:#111;letter-spacing:-0.223px;">30/12/1899</span>
<span class="a t" style="left:462.70px;top:174.00px;line-height:12px;font-size:9.6px;color:#111;letter-spacing:-0.25px;">01</span>
<svg class="a" style="left:460.5px;top:172px;" width="6" height="6" viewBox="0 0 6 6"><path d="M0 0 H5.2 L0 5.2 z" fill="#1d8a2c"/></svg>
<span class="a t" style="left:852.70px;top:174.00px;line-height:12px;font-size:9.6px;color:#111;letter-spacing:-0.235px;">Quincenal</span>
<span class="a t" style="left:946.20px;top:174.00px;line-height:12px;font-size:9.6px;color:#111;letter-spacing:-0.25px;">F</span>
<span class="a t" style="left:1136.20px;top:174.00px;line-height:12px;font-size:9.6px;color:#111;letter-spacing:-0.223px;">05/07/2022</span>
<span class="a t" style="left:1266.70px;top:174.00px;line-height:12px;font-size:9.6px;color:#111;letter-spacing:-0.366px;">372.67</span>
<svg class="a" style="left:1264.5px;top:172px;" width="6" height="6" viewBox="0 0 6 6"><path d="M0 0 H5.2 L0 5.2 z" fill="#1d8a2c"/></svg>
<span class="a t" style="left:1355.45px;top:174.00px;line-height:12px;font-size:9.6px;color:#111;letter-spacing:-0.223px;">05/07/2022</span>
<span class="a t" style="left:1565.70px;top:174.00px;line-height:12px;font-size:9.6px;color:#111;letter-spacing:-0.223px;">05/07/2022</span>
<div class="a" style="left:1051.75px;top:189px;width:82.25px;height:16px;background:#fcdcab;"></div>
<div class="a" style="left:1469px;top:189px;width:94.5px;height:16px;background:#fcdcab;"></div>
<div class="a" style="left:22px;top:205px;width:1580.4px;height:1px;background:#76c2ea;"></div>
<span class="a t" style="left:24.20px;top:191.00px;line-height:12px;font-size:9.6px;color:#111;letter-spacing:-0.25px;">006</span>
<svg class="a" style="left:22px;top:189px;" width="6" height="6" viewBox="0 0 6 6"><path d="M0 0 H5.2 L0 5.2 z" fill="#1d8a2c"/></svg>
<span class="a t" style="left:76.70px;top:191.00px;line-height:12px;font-size:9.6px;color:#111;letter-spacing:-0.25px;">A</span>
<span class="a t" style="left:182.20px;top:191.00px;line-height:12px;font-size:9.6px;color:#111;letter-spacing:-0.223px;">13/06/2022</span>
<span class="a t" style="left:265.20px;top:191.00px;line-height:12px;font-size:9.6px;color:#111;letter-spacing:-0.223px;">30/12/1899</span>
<span class="a t" style="left:350.70px;top:191.00px;line-height:12px;font-size:9.6px;color:#111;letter-spacing:-0.223px;">30/12/1899</span>
<span class="a t" style="left:462.70px;top:191.00px;line-height:12px;font-size:9.6px;color:#111;letter-spacing:-0.25px;">01</span>
<svg class="a" style="left:460.5px;top:189px;" width="6" height="6" viewBox="0 0 6 6"><path d="M0 0 H5.2 L0 5.2 z" fill="#1d8a2c"/></svg>
<span class="a t" style="left:852.70px;top:191.00px;line-height:12px;font-size:9.6px;color:#111;letter-spacing:-0.235px;">Quincenal</span>
<span class="a t" style="left:946.20px;top:191.00px;line-height:12px;font-size:9.6px;color:#111;letter-spacing:-0.25px;">F</span>
<span class="a t" style="left:1136.20px;top:191.00px;line-height:12px;font-size:9.6px;color:#111;letter-spacing:-0.223px;">13/06/2022</span>
<span class="a t" style="left:1266.70px;top:191.00px;line-height:12px;font-size:9.6px;color:#111;letter-spacing:-0.366px;">372.67</span>
<svg class="a" style="left:1264.5px;top:189px;" width="6" height="6" viewBox="0 0 6 6"><path d="M0 0 H5.2 L0 5.2 z" fill="#1d8a2c"/></svg>
<span class="a t" style="left:1355.45px;top:191.00px;line-height:12px;font-size:9.6px;color:#111;letter-spacing:-0.223px;">13/06/2022</span>
<span class="a t" style="left:1565.70px;top:191.00px;line-height:12px;font-size:9.6px;color:#111;letter-spacing:-0.223px;">13/06/2022</span>
<div class="a" style="left:22px;top:206px;width:1580.4px;height:16px;background:#c0e4f5;"></div>
<div class="a" style="left:1051.75px;top:206px;width:82.25px;height:16px;background:#fcdcab;"></div>
<div class="a" style="left:1469px;top:206px;width:94.5px;height:16px;background:#fcdcab;"></div>
<div class="a" style="left:22px;top:222px;width:1580.4px;height:1px;background:#76c2ea;"></div>
<span class="a t" style="left:24.20px;top:208.00px;line-height:12px;font-size:9.6px;color:#111;letter-spacing:-0.25px;">007</span>
<svg class="a" style="left:22px;top:206px;" width="6" height="6" viewBox="0 0 6 6"><path d="M0 0 H5.2 L0 5.2 z" fill="#1d8a2c"/></svg>
<span class="a t" style="left:76.70px;top:208.00px;line-height:12px;font-size:9.6px;color:#111;letter-spacing:-0.25px;">A</span>
<span class="a t" style="left:182.20px;top:208.00px;line-height:12px;font-size:9.6px;color:#111;letter-spacing:-0.223px;">13/06/2022</span>
<span class="a t" style="left:265.20px;top:208.00px;line-height:12px;font-size:9.6px;color:#111;letter-spacing:-0.223px;">30/12/1899</span>
<span class="a t" style="left:350.70px;top:208.00px;line-height:12px;font-size:9.6px;color:#111;letter-spacing:-0.223px;">30/12/1899</span>
<span class="a t" style="left:462.70px;top:208.00px;line-height:12px;font-size:9.6px;color:#111;letter-spacing:-0.25px;">01</span>
<svg class="a" style="left:460.5px;top:206px;" width="6" height="6" viewBox="0 0 6 6"><path d="M0 0 H5.2 L0 5.2 z" fill="#1d8a2c"/></svg>
<span class="a t" style="left:852.70px;top:208.00px;line-height:12px;font-size:9.6px;color:#111;letter-spacing:-0.235px;">Quincenal</span>
<span class="a t" style="left:946.20px;top:208.00px;line-height:12px;font-size:9.6px;color:#111;letter-spacing:-0.25px;">F</span>
<span class="a t" style="left:1136.20px;top:208.00px;line-height:12px;font-size:9.6px;color:#111;letter-spacing:-0.223px;">13/06/2022</span>
<span class="a t" style="left:1266.70px;top:208.00px;line-height:12px;font-size:9.6px;color:#111;letter-spacing:-0.366px;">372.67</span>
<svg class="a" style="left:1264.5px;top:206px;" width="6" height="6" viewBox="0 0 6 6"><path d="M0 0 H5.2 L0 5.2 z" fill="#1d8a2c"/></svg>
<span class="a t" style="left:1355.45px;top:208.00px;line-height:12px;font-size:9.6px;color:#111;letter-spacing:-0.223px;">13/06/2022</span>
<span class="a t" style="left:1565.70px;top:208.00px;line-height:12px;font-size:9.6px;color:#111;letter-spacing:-0.223px;">13/06/2022</span>
<div class="a" style="left:1051.75px;top:223px;width:82.25px;height:16px;background:#fcdcab;"></div>
<div class="a" style="left:1469px;top:223px;width:94.5px;height:16px;background:#fcdcab;"></div>
<div class="a" style="left:22px;top:239px;width:1580.4px;height:1px;background:#76c2ea;"></div>
<span class="a t" style="left:24.20px;top:225.00px;line-height:12px;font-size:9.6px;color:#111;letter-spacing:-0.25px;">008</span>
<svg class="a" style="left:22px;top:223px;" width="6" height="6" viewBox="0 0 6 6"><path d="M0 0 H5.2 L0 5.2 z" fill="#1d8a2c"/></svg>
<span class="a t" style="left:76.70px;top:225.00px;line-height:12px;font-size:9.6px;color:#111;letter-spacing:-0.25px;">A</span>
<span class="a t" style="left:182.20px;top:225.00px;line-height:12px;font-size:9.6px;color:#111;letter-spacing:-0.223px;">30/05/2022</span>
<span class="a t" style="left:265.20px;top:225.00px;line-height:12px;font-size:9.6px;color:#111;letter-spacing:-0.223px;">30/12/1899</span>
<span class="a t" style="left:350.70px;top:225.00px;line-height:12px;font-size:9.6px;color:#111;letter-spacing:-0.223px;">30/12/1899</span>
<span class="a t" style="left:462.70px;top:225.00px;line-height:12px;font-size:9.6px;color:#111;letter-spacing:-0.25px;">01</span>
<svg class="a" style="left:460.5px;top:223px;" width="6" height="6" viewBox="0 0 6 6"><path d="M0 0 H5.2 L0 5.2 z" fill="#1d8a2c"/></svg>
<span class="a t" style="left:852.70px;top:225.00px;line-height:12px;font-size:9.6px;color:#111;letter-spacing:-0.235px;">Quincenal</span>
<span class="a t" style="left:946.20px;top:225.00px;line-height:12px;font-size:9.6px;color:#111;letter-spacing:-0.25px;">F</span>
<span class="a t" style="left:1136.20px;top:225.00px;line-height:12px;font-size:9.6px;color:#111;letter-spacing:-0.223px;">30/05/2022</span>
<span class="a t" style="left:1266.70px;top:225.00px;line-height:12px;font-size:9.6px;color:#111;letter-spacing:-0.366px;">372.67</span>
<svg class="a" style="left:1264.5px;top:223px;" width="6" height="6" viewBox="0 0 6 6"><path d="M0 0 H5.2 L0 5.2 z" fill="#1d8a2c"/></svg>
<span class="a t" style="left:1355.45px;top:225.00px;line-height:12px;font-size:9.6px;color:#111;letter-spacing:-0.223px;">30/05/2022</span>
<span class="a t" style="left:1565.70px;top:225.00px;line-height:12px;font-size:9.6px;color:#111;letter-spacing:-0.223px;">30/05/2022</span>
<div class="a" style="left:22px;top:103px;width:1580.4px;height:1px;background:#b4b8ba;"></div>
</div>
<div class="a" style="left:1612.2px;top:192.6px;width:13.8px;height:265.4px;background:#3d3d3d;border-radius:7px;"></div>
<svg class="a" style="left:1614.6px;top:196.2px;" width="9" height="7" viewBox="0 0 9 7"><path d="M4.5 0.8 L8.4 6 H0.6 z" fill="#d8d8d8"/></svg>
<div class="a" style="left:1615.3px;top:206.6px;width:7.5px;height:140px;background:#c8c8c8;border-radius:4px;"></div>
<svg class="a" style="left:1614.6px;top:447.4px;" width="9" height="7" viewBox="0 0 9 7"><path d="M0.6 1 H8.4 L4.5 6.2 z" fill="#d8d8d8"/></svg>
<svg class="a" style="left:30.5px;top:464.5px;" width="7" height="10" viewBox="0 0 7 10"><path d="M5.6 1 L1.4 5 L5.6 9" fill="none" stroke="#8d959b" stroke-width="1.1" stroke-linecap="round" stroke-linejoin="round"/></svg>
<svg class="a" style="left:58.4px;top:464.5px;" width="7" height="10" viewBox="0 0 7 10"><path d="M1.4 1 L5.6 5 L1.4 9" fill="none" stroke="#8d959b" stroke-width="1.1" stroke-linecap="round" stroke-linejoin="round"/></svg>
<svg class="a" style="left:99px;top:443px;filter:drop-shadow(1.5px 2px 1.5px rgba(0,0,0,.55));overflow:visible;" width="125.2" height="43.8" viewBox="0 0 125.2 43.8"><rect x="7.5" y="7.5" width="110.2" height="28.8" fill="#fff" stroke="#08387e" stroke-width="3" stroke-dasharray="7.3 3.8" stroke-dashoffset="-8"/></svg>
<span class="a t" style="left:112.90px;top:461.00px;line-height:14px;font-size:11px;color:#2b2b2b;letter-spacing:0.488px;-webkit-text-stroke:0.3px #2b2b2b;">Exportacion Datos</span>
<div class="a" style="left:112.8px;top:475.6px;width:97.8px;height:1.4px;background:#1f8a4c;"></div>
<div class="a" style="left:221px;top:460px;width:1px;height:19px;background:#8d959b;"></div>
<svg class="a" style="left:256.5px;top:463.6px;" width="11" height="11" viewBox="0 0 11 11"><path d="M5.5 0.6 V10.4 M0.6 5.5 H10.4" stroke="#d4d8dc" stroke-width="0.9"/></svg>
<div class="a" style="left:981px;top:466px;width:1.6px;height:1.6px;background:#e8e8e8;"></div>
<div class="a" style="left:981px;top:469.4px;width:1.6px;height:1.6px;background:#e8e8e8;"></div>
<div class="a" style="left:981px;top:472.8px;width:1.6px;height:1.6px;background:#e8e8e8;"></div>
<div class="a" style="left:995.6px;top:462px;width:613.6px;height:14.4px;background:#3a3a3a;border-radius:7px;"></div>
<svg class="a" style="left:999px;top:465px;" width="7" height="9" viewBox="0 0 7 9"><path d="M6.4 0.6 V8.4 L0.8 4.5 z" fill="#d8d8d8"/></svg>
<div class="a" style="left:1010px;top:465.2px;width:95.6px;height:7.6px;background:#c8c8c8;border-radius:4px;"></div>
<svg class="a" style="left:1598.6px;top:465px;" width="7" height="9" viewBox="0 0 7 9"><path d="M0.6 0.6 V8.4 L6.2 4.5 z" fill="#d8d8d8"/></svg>
<div class="a" style="left:7px;top:483.4px;width:1621px;height:18.8px;background:#4f4f4f;border-radius:0 0 5px 5px;border-top:1px solid #444;box-sizing:border-box;"></div>
<span class="a t" style="left:16.80px;top:489.00px;line-height:12px;font-size:9.6px;color:#fff;letter-spacing:-0.189px;-webkit-text-stroke:0.15px #fff;">Listo</span>
<svg class="a" style="left:53px;top:486.6px;" width="13" height="13" viewBox="0 0 13 13"><circle cx="5" cy="2.2" r="1.5" fill="none" stroke="#f2f2f2" stroke-width="0.9"/>
<path d="M0.8 4.8 C3 5.6 7 5.6 9.2 4.8 M5 5.4 V8.2 M5 8.2 L2.4 12.2 M5 8.2 L6.4 10.4" fill="none" stroke="#f2f2f2" stroke-width="1.1" stroke-linecap="round"/>
<text x="7.4" y="12.6" font-family="Liberation Sans, sans-serif" font-size="8" font-weight="700" fill="#f2f2f2">?</text></svg>
<span class="a t" style="left:68.30px;top:489.00px;line-height:12px;font-size:9.6px;color:#fff;letter-spacing:0.157px;-webkit-text-stroke:0.2px #fff;">Accesibilidad: No disponible</span>
<svg class="a" style="left:1198px;top:486.5px;" width="13" height="12" viewBox="0 0 13 12"><rect x="0.8" y="0.8" width="10.6" height="7.4" fill="none" stroke="#eee" stroke-width="0.9"/>
<path d="M3 10.6 h4" stroke="#eee" stroke-width="0.9"/>
<circle cx="9.4" cy="8.4" r="2.4" fill="#4f4f4f" stroke="#eee" stroke-width="0.9"/><circle cx="9.4" cy="8.4" r="0.7" fill="#eee"/></svg>
<span class="a t" style="left:1213.00px;top:489.00px;line-height:12px;font-size:9.6px;color:#fff;letter-spacing:0.152px;-webkit-text-stroke:0.15px #fff;">Configuración de visualización</span>
<div class="a" style="left:1364px;top:484.5px;width:33.5px;height:17.5px;background:#5e5e5e;"></div>
<svg class="a" style="left:1374.5px;top:487px;" width="12" height="12" viewBox="0 0 12 12"><rect x="0.6" y="0.6" width="10.6" height="10.2" fill="none" stroke="#f0f0f0" stroke-width="0.9"/><path d="M0.6 4 h10.6 M0.6 7.4 h10.6 M4.2 0.6 v10.2 M7.7 0.6 v10.2" stroke="#f0f0f0" stroke-width="0.9"/></svg>
<svg class="a" style="left:1408px;top:487px;" width="13" height="12" viewBox="0 0 13 12"><rect x="0.6" y="0.6" width="11.6" height="10.2" fill="none" stroke="#f0f0f0" stroke-width="0.9"/><rect x="3.2" y="3" width="6.4" height="5.4" fill="none" stroke="#f0f0f0" stroke-width="0.9"/><path d="M4.6 5 h3.6 M4.6 6.6 h3.6" stroke="#f0f0f0" stroke-width="0.7"/></svg>
<svg class="a" style="left:1442.4px;top:487px;" width="13" height="12" viewBox="0 0 13 12"><rect x="0.6" y="0.6" width="11.4" height="10.2" fill="none" stroke="#f0f0f0" stroke-width="0.9"/><path d="M3.4 0.6 v5 h5 v-5 M6 0.6 v5" fill="none" stroke="#f0f0f0" stroke-width="0.9"/></svg>
<div class="a" style="left:1470.8px;top:492.4px;width:6.2px;height:1px;background:#e0e0e0;"></div>
<div class="a" style="left:1481.5px;top:492.5px;width:84.4px;height:1px;background:#9a9a9a;"></div>
<div class="a" style="left:1522px;top:487.6px;width:4.2px;height:11px;background:#dcdcdc;border-radius:1px;"></div>
<svg class="a" style="left:1570.5px;top:489px;" width="7" height="7" viewBox="0 0 7 7"><path d="M3.5 0.4 V6.6 M0.4 3.5 H6.6" stroke="#e0e0e0" stroke-width="1"/></svg>
<span class="a t" style="left:1588.80px;top:488.00px;line-height:13px;font-size:9.8px;color:#fff;letter-spacing:-1.057px;-webkit-text-stroke:0.1px #fff;">100%</span>
</body></html>
